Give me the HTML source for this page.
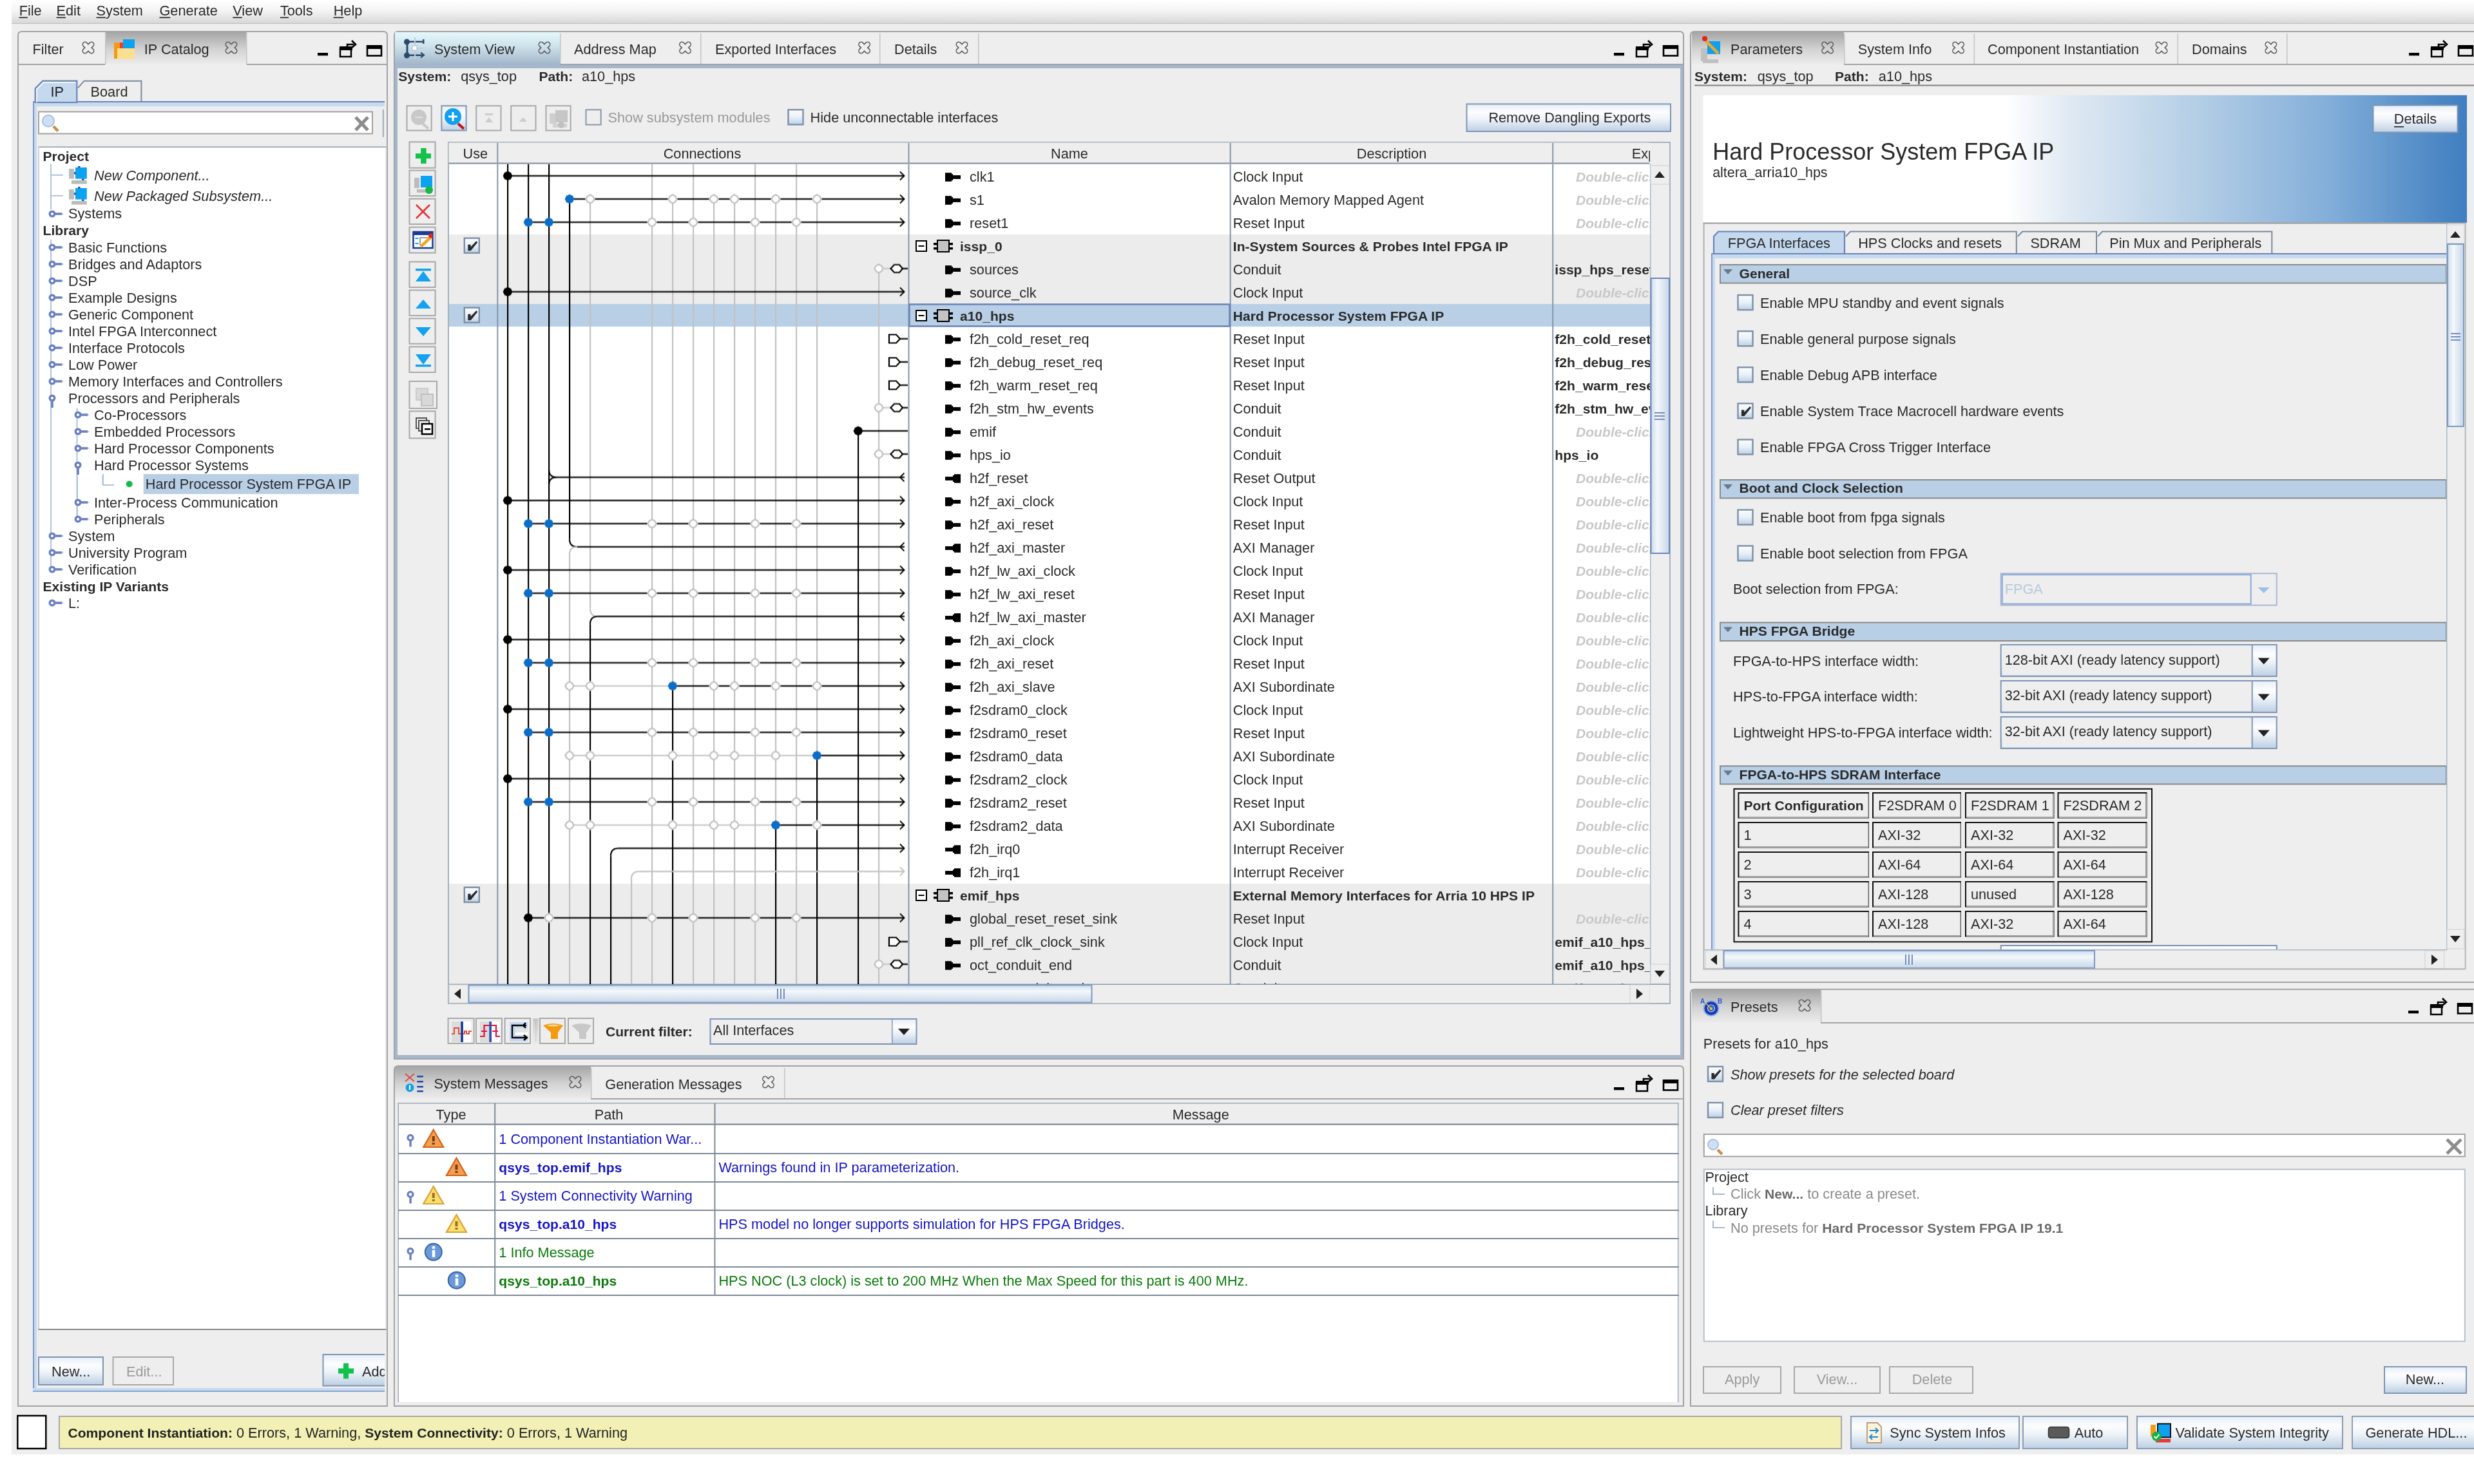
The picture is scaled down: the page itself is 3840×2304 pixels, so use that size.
<!DOCTYPE html><html><head><meta charset="utf-8"><style>html,body{margin:0;padding:0;background:#fff;overflow:hidden}svg{display:block;will-change:transform}text{font-family:"Liberation Sans",sans-serif}</style></head><body><svg width="3840" height="2304" viewBox="0 0 3840 2304"><defs><linearGradient id="cbg" x1="0" y1="0" x2="0" y2="1"><stop offset="0" stop-color="#fbfdff"/><stop offset="0.5" stop-color="#e8f0f8"/><stop offset="1" stop-color="#bcd0e8"/></linearGradient></defs>
<defs><linearGradient id="menug" x1="0" y1="0" x2="0" y2="1"><stop offset="0" stop-color="#ffffff"/><stop offset="0.5" stop-color="#f3f3f3"/><stop offset="1" stop-color="#d9d9d9"/></linearGradient></defs>
<defs><linearGradient id="tabdark" x1="0" y1="0" x2="0" y2="1"><stop offset="0" stop-color="#a6a6a6"/><stop offset="0.55" stop-color="#d4d4d4"/><stop offset="1" stop-color="#ececec"/></linearGradient></defs>
<defs><linearGradient id="tabblue" x1="0" y1="0" x2="0" y2="1"><stop offset="0" stop-color="#e4f8fc"/><stop offset="0.4" stop-color="#cfe3ec"/><stop offset="1" stop-color="#9fb3c8"/></linearGradient></defs>
<defs><linearGradient id="btng" x1="0" y1="0" x2="0" y2="1"><stop offset="0" stop-color="#e6eef7"/><stop offset="0.3" stop-color="#fcfdfe"/><stop offset="0.55" stop-color="#eef3f8"/><stop offset="1" stop-color="#bccfe4"/></linearGradient></defs>
<defs><linearGradient id="sbg" x1="0" y1="0" x2="0" y2="1"><stop offset="0" stop-color="#cbdcec"/><stop offset="0.35" stop-color="#f4f8fb"/><stop offset="1" stop-color="#c5d6e8"/></linearGradient></defs>
<defs><linearGradient id="sbv" x1="0" y1="0" x2="1" y2="0"><stop offset="0" stop-color="#cbdcec"/><stop offset="0.35" stop-color="#f4f8fb"/><stop offset="1" stop-color="#c5d6e8"/></linearGradient></defs>
<rect x="0" y="0" width="3840" height="2304" fill="#ffffff"/>
<rect x="18" y="0" width="3822" height="2258" fill="#eeeeee"/>
<rect x="18" y="0" width="3822" height="35" fill="url(#menug)"/>
<rect x="18" y="35.5" width="3822" height="1.6" fill="#c0c0c0"/>
<text x="29.7" y="24" font-size="21.7" fill="#2a2a2a">File</text>
<text x="87.6" y="24" font-size="21.7" fill="#2a2a2a">Edit</text>
<text x="149.6" y="24" font-size="21.7" fill="#2a2a2a">System</text>
<text x="247.5" y="24" font-size="21.7" fill="#2a2a2a">Generate</text>
<text x="361.3" y="24" font-size="21.7" fill="#2a2a2a">View</text>
<text x="434.9" y="24" font-size="21.7" fill="#2a2a2a">Tools</text>
<text x="517.7" y="24" font-size="21.7" fill="#2a2a2a">Help</text>
<rect x="29.7" y="26.5" width="13.140625" height="1.6" fill="#222"/>
<rect x="87.6" y="26.5" width="14.34375" height="1.6" fill="#222"/>
<rect x="149.6" y="26.5" width="14.34375" height="1.6" fill="#222"/>
<rect x="247.5" y="26.5" width="16.71875" height="1.6" fill="#222"/>
<rect x="361.3" y="26.5" width="14.34375" height="1.6" fill="#222"/>
<rect x="434.9" y="26.5" width="13.140625" height="1.6" fill="#222"/>
<rect x="517.7" y="26.5" width="15.53125" height="1.6" fill="#222"/>
<path d="M28,2183 L28,55 Q28,49 34,49 L595,49 Q601,49 601,55 L601,2183 Z" fill="#eeeeee" stroke="#a3a3a3" stroke-width="2"/>
<rect x="28" y="99" width="135" height="2" fill="#a3a3a3"/>
<rect x="383" y="99" width="218" height="2" fill="#a3a3a3"/>
<rect x="164" y="50" width="219" height="50" fill="url(#tabdark)"/>
<text x="223.8" y="84" font-size="21.7" fill="#2a2a2a">IP Catalog</text>
<defs><mask id="xm" maskUnits="userSpaceOnUse" x="-5" y="-5" width="30" height="30"><path d="M5,5 L15,15 M15,5 L5,15" stroke="#fff" stroke-width="9" stroke-linecap="round" fill="none"/><path d="M5,5 L15,15 M15,5 L5,15" stroke="#000" stroke-width="6" stroke-linecap="round" fill="none"/></mask></defs>
<g transform="translate(349,64)"><rect x="-3" y="-3" width="26" height="26" fill="#5a5a5a" mask="url(#xm)"/></g>
<rect x="163" y="50" width="1.5" height="50" fill="#c4c4c4"/>
<rect x="177" y="66" width="10" height="25" fill="#f59a12"/>
<rect x="186" y="66" width="6" height="12" fill="#e8402a"/>
<rect x="191" y="61" width="18" height="18" fill="#0aa3f2"/>
<rect x="182" y="75" width="27" height="16.5" fill="#fbdf90"/>
<rect x="382" y="50" width="1.5" height="50" fill="#c4c4c4"/>
<text x="50.5" y="84" font-size="21.7" fill="#2a2a2a">Filter</text>
<g transform="translate(127,64)"><rect x="-3" y="-3" width="26" height="26" fill="#5a5a5a" mask="url(#xm)"/></g>
<rect x="493" y="82" width="16" height="4.4" fill="#000"/>
<rect x="528" y="75" width="17" height="13" fill="#eeeeee" stroke="#000" stroke-width="2.5"/>
<rect x="527" y="72" width="20" height="6" fill="#000"/>
<path d="M539,72 L539,69 L549,69" fill="none" stroke="#000" stroke-width="2.6"/>
<path d="M546,63 L552,69 L546,74" fill="none" stroke="#000" stroke-width="2.6"/>
<rect x="570" y="71.5" width="22" height="15" fill="#eeeeee" stroke="#000" stroke-width="2.6"/>
<rect x="569" y="70" width="24" height="6" fill="#000"/>
<path d="M612,1644 L612,55 Q612,49 618,49 L2607,49 Q2613,49 2613,55 L2613,1644 Z" fill="#eeeeee" stroke="#a3a3a3" stroke-width="2"/>
<rect x="613" y="50" width="256" height="52" fill="url(#tabblue)"/>
<text x="674" y="84" font-size="21.7" fill="#2a2a2a">System View</text>
<g transform="translate(835,64)"><rect x="-3" y="-3" width="26" height="26" fill="#5a5a5a" mask="url(#xm)"/></g>
<rect x="869" y="52" width="1.5" height="48" fill="#c4c4c4"/>
<rect x="1087" y="52" width="1.5" height="48" fill="#c4c4c4"/>
<rect x="1365" y="52" width="1.5" height="48" fill="#c4c4c4"/>
<rect x="1518" y="52" width="1.5" height="48" fill="#c4c4c4"/>
<rect x="869" y="99" width="1743" height="2" fill="#a3a3a3"/>
<path d="M627,65 a4.5,4.5 0 1,0 9,0 a4.5,4.5 0 1,0 -9,0 Z" fill="#2a4a6a"/>
<path d="M627,86 a4.5,4.5 0 1,0 9,0 a4.5,4.5 0 1,0 -9,0 Z" fill="#2a4a6a"/>
<rect x="630.5" y="65" width="3" height="21" fill="#2a4a6a"/>
<rect x="635" y="63.5" width="23" height="2.5" fill="#2a4a6a"/>
<rect x="635" y="84.5" width="23" height="2.5" fill="#2a4a6a"/>
<rect x="656" y="61" width="2.5" height="7" fill="#2a4a6a"/>
<path d="M653,81.5 L658,85.5 L653,89.5" fill="none" stroke="#2a4a6a" stroke-width="2.2"/>
<rect x="643" y="58" width="2" height="34" fill="#c0ccd8"/>
<rect x="640" y="71" width="7" height="7" fill="#ffffff" stroke="#c0ccd8" stroke-width="1.5"/>
<rect x="647" y="74" width="10" height="1.5" fill="#c0ccd8"/>
<text x="891" y="84" font-size="21.7" fill="#2a2a2a">Address Map</text>
<g transform="translate(1053.5,64)"><rect x="-3" y="-3" width="26" height="26" fill="#5a5a5a" mask="url(#xm)"/></g>
<text x="1110" y="84" font-size="21.7" fill="#2a2a2a">Exported Interfaces</text>
<g transform="translate(1331.6,64)"><rect x="-3" y="-3" width="26" height="26" fill="#5a5a5a" mask="url(#xm)"/></g>
<text x="1388" y="84" font-size="21.7" fill="#2a2a2a">Details</text>
<g transform="translate(1483,64)"><rect x="-3" y="-3" width="26" height="26" fill="#5a5a5a" mask="url(#xm)"/></g>
<rect x="2505" y="82" width="16" height="4.4" fill="#000"/>
<rect x="2540" y="75" width="17" height="13" fill="#eeeeee" stroke="#000" stroke-width="2.5"/>
<rect x="2539" y="72" width="20" height="6" fill="#000"/>
<path d="M2551,72 L2551,69 L2561,69" fill="none" stroke="#000" stroke-width="2.6"/>
<path d="M2558,63 L2564,69 L2558,74" fill="none" stroke="#000" stroke-width="2.6"/>
<rect x="2582" y="71.5" width="22" height="15" fill="#eeeeee" stroke="#000" stroke-width="2.6"/>
<rect x="2581" y="70" width="24" height="6" fill="#000"/>
<rect x="613" y="101" width="1998" height="5" fill="#a4b7cc"/>
<rect x="613" y="101" width="4" height="1541" fill="#a4b7cc"/>
<rect x="2608" y="101" width="4" height="1541" fill="#a4b7cc"/>
<rect x="613" y="1638" width="1998" height="5" fill="#a4b7cc"/>
<path d="M612,2183 L612,1661 Q612,1655 618,1655 L2607,1655 Q2613,1655 2613,1661 L2613,2183 Z" fill="#eeeeee" stroke="#a3a3a3" stroke-width="2"/>
<rect x="613" y="1656" width="304" height="50" fill="url(#tabdark)"/>
<text x="673.4" y="1690" font-size="21.7" fill="#2a2a2a">System Messages</text>
<g transform="translate(883,1670)"><rect x="-3" y="-3" width="26" height="26" fill="#5a5a5a" mask="url(#xm)"/></g>
<rect x="917" y="1658" width="1.5" height="48" fill="#c4c4c4"/>
<rect x="1217" y="1658" width="1.5" height="48" fill="#c4c4c4"/>
<rect x="917" y="1705" width="1696" height="2" fill="#a3a3a3"/>
<text x="939.3" y="1690.5" font-size="21.7" fill="#2a2a2a">Generation Messages</text>
<g transform="translate(1182.5,1670)"><rect x="-3" y="-3" width="26" height="26" fill="#5a5a5a" mask="url(#xm)"/></g>
<rect x="2505" y="1688" width="16" height="4.4" fill="#000"/>
<rect x="2540" y="1681" width="17" height="13" fill="#eeeeee" stroke="#000" stroke-width="2.5"/>
<rect x="2539" y="1678" width="20" height="6" fill="#000"/>
<path d="M2551,1678 L2551,1675 L2561,1675" fill="none" stroke="#000" stroke-width="2.6"/>
<path d="M2558,1669 L2564,1675 L2558,1680" fill="none" stroke="#000" stroke-width="2.6"/>
<rect x="2582" y="1677.5" width="22" height="15" fill="#eeeeee" stroke="#000" stroke-width="2.6"/>
<rect x="2581" y="1676" width="24" height="6" fill="#000"/>
<path d="M2624,1525 L2624,55 Q2624,49 2630,49 L3854,49 Q3860,49 3860,55 L3860,1525 Z" fill="#eeeeee" stroke="#a3a3a3" stroke-width="2"/>
<rect x="2626" y="50" width="236" height="50" fill="url(#tabdark)"/>
<text x="2686" y="84" font-size="21.7" fill="#2a2a2a">Parameters</text>
<g transform="translate(2826.6,64)"><rect x="-3" y="-3" width="26" height="26" fill="#5a5a5a" mask="url(#xm)"/></g>
<rect x="2862" y="52" width="1.5" height="48" fill="#c4c4c4"/>
<rect x="3063.6" y="52" width="1.5" height="48" fill="#c4c4c4"/>
<rect x="3379.5" y="52" width="1.5" height="48" fill="#c4c4c4"/>
<rect x="3549" y="52" width="1.5" height="48" fill="#c4c4c4"/>
<rect x="2862" y="99" width="1000" height="2" fill="#a3a3a3"/>
<text x="2883.7" y="84" font-size="21.7" fill="#2a2a2a">System Info</text>
<g transform="translate(3029.6,64)"><rect x="-3" y="-3" width="26" height="26" fill="#5a5a5a" mask="url(#xm)"/></g>
<text x="3085" y="84" font-size="21.7" fill="#2a2a2a">Component Instantiation</text>
<g transform="translate(3345,64)"><rect x="-3" y="-3" width="26" height="26" fill="#5a5a5a" mask="url(#xm)"/></g>
<text x="3402" y="84" font-size="21.7" fill="#2a2a2a">Domains</text>
<g transform="translate(3514.8,64)"><rect x="-3" y="-3" width="26" height="26" fill="#5a5a5a" mask="url(#xm)"/></g>
<rect x="3739" y="82" width="16" height="4.4" fill="#000"/>
<rect x="3774" y="75" width="17" height="13" fill="#eeeeee" stroke="#000" stroke-width="2.5"/>
<rect x="3773" y="72" width="20" height="6" fill="#000"/>
<path d="M3785,72 L3785,69 L3795,69" fill="none" stroke="#000" stroke-width="2.6"/>
<path d="M3792,63 L3798,69 L3792,74" fill="none" stroke="#000" stroke-width="2.6"/>
<rect x="3816" y="71.5" width="22" height="15" fill="#eeeeee" stroke="#000" stroke-width="2.6"/>
<rect x="3815" y="70" width="24" height="6" fill="#000"/>
<path d="M2624,2183 L2624,1542 Q2624,1536 2630,1536 L3854,1536 Q3860,1536 3860,1542 L3860,2183 Z" fill="#eeeeee" stroke="#a3a3a3" stroke-width="2"/>
<rect x="2626" y="1537" width="200" height="51" fill="url(#tabdark)"/>
<text x="2686" y="1571" font-size="21.7" fill="#2a2a2a">Presets</text>
<g transform="translate(2791,1551)"><rect x="-3" y="-3" width="26" height="26" fill="#5a5a5a" mask="url(#xm)"/></g>
<rect x="2826" y="1538" width="1.5" height="50" fill="#c4c4c4"/>
<rect x="2826" y="1587" width="1040" height="2" fill="#a3a3a3"/>
<rect x="3738" y="1569" width="16" height="4.4" fill="#000"/>
<rect x="3773" y="1562" width="17" height="13" fill="#eeeeee" stroke="#000" stroke-width="2.5"/>
<rect x="3772" y="1559" width="20" height="6" fill="#000"/>
<path d="M3784,1559 L3784,1556 L3794,1556" fill="none" stroke="#000" stroke-width="2.6"/>
<path d="M3791,1550 L3797,1556 L3791,1561" fill="none" stroke="#000" stroke-width="2.6"/>
<rect x="3815" y="1558.5" width="22" height="15" fill="#eeeeee" stroke="#000" stroke-width="2.6"/>
<rect x="3814" y="1557" width="24" height="6" fill="#000"/>
<rect x="51" y="157" width="546" height="2.2" fill="#6a84b8"/>
<rect x="53" y="159.2" width="544" height="6" fill="#c6daf0"/>
<rect x="51" y="157" width="2" height="2004" fill="#7e98c8"/>
<rect x="53" y="159" width="4" height="2000" fill="#c6daf0"/>
<rect x="51" y="2155" width="546" height="4" fill="#c6daf0"/>
<rect x="51" y="2159" width="546" height="2" fill="#8aa4d0"/>
<path d="M54.7,159 L54.7,137.3 L66.3,125.7 L119.3,125.7 L119.3,159 Z" fill="#c4d8ee" stroke="#6a84b8" stroke-width="2.2"/>
<path d="M57,159 L57,138.5 L67.5,128 L117,128" fill="none" stroke="#ffffff" stroke-width="1.5"/>
<path d="M121,136.3 L130.5,125.7 L219.4,125.7 L219.4,157" fill="#eeeeee" stroke="#7a8a9c" stroke-width="2"/>
<text x="78.4" y="150" font-size="21.7" fill="#1e1e1e">IP</text>
<text x="140.6" y="150" font-size="21.7" fill="#2a2a2a">Board</text>
<rect x="60" y="173.5" width="518" height="34" fill="#ffffff" stroke="#a2a2a2" stroke-width="2"/>
<path d="M66,187.8 a9,9 0 1,0 18,0 a9,9 0 1,0 -18,0 Z" fill="#cfe0f4" stroke="#a9c0de" stroke-width="2"/>
<line x1="83" y1="196" x2="90" y2="203.5" stroke="#c8904c" stroke-width="4.5"/>
<line x1="552" y1="182" x2="571" y2="202" stroke="#8c8c8c" stroke-width="5"/>
<line x1="571" y1="182" x2="552" y2="202" stroke="#8c8c8c" stroke-width="5"/>
<rect x="594" y="170" width="1.5" height="43" fill="#8898a8"/>
<rect x="59.5" y="228.5" width="538" height="1836" fill="#ffffff"/>
<rect x="59.5" y="227.5" width="540" height="1.5" fill="#8a9aaa"/>
<rect x="59.5" y="227.5" width="1.5" height="1837" fill="#c0cad4"/>
<rect x="59.5" y="2063" width="540" height="2" fill="#8a8a8a"/>
<text x="66.5" y="249.5" font-size="21.1" fill="#2a2a2a" font-weight="bold">Project</text>
<rect x="78" y="255" width="2" height="70" fill="#afc3dd"/>
<rect x="80" y="270.8" width="18" height="2" fill="#afc3dd"/>
<rect x="80" y="302.8" width="18" height="2" fill="#afc3dd"/>
<rect x="107" y="262" width="8" height="15.6" fill="#bcbcbc"/>
<rect x="117" y="260" width="17.8" height="17.6" fill="#0aa3f2"/>
<rect x="111" y="280" width="23.8" height="5.6" fill="#bcbcbc"/>
<rect x="121" y="258" width="3.5" height="2.5" fill="#1a56a8"/>
<rect x="115" y="267" width="2.5" height="3.5" fill="#1a56a8"/>
<rect x="127" y="277.5" width="3.5" height="2.5" fill="#1a56a8"/>
<rect x="107" y="294" width="8" height="15.6" fill="#bcbcbc"/>
<rect x="117" y="292" width="17.8" height="17.6" fill="#0aa3f2"/>
<rect x="111" y="312" width="23.8" height="5.6" fill="#bcbcbc"/>
<rect x="121" y="290" width="3.5" height="2.5" fill="#1a56a8"/>
<rect x="115" y="299" width="2.5" height="3.5" fill="#1a56a8"/>
<rect x="127" y="309.5" width="3.5" height="2.5" fill="#1a56a8"/>
<text x="146" y="280" font-size="21.7" fill="#2a2a2a" font-style="italic">New Component...</text>
<text x="146" y="311.8" font-size="21.7" fill="#2a2a2a" font-style="italic">New Packaged Subsystem...</text>
<path d="M77.2,332 a3.8,3.8 0 1,0 7.6,0 a3.8,3.8 0 1,0 -7.6,0 Z" fill="#ffffff" stroke="#6a80c0" stroke-width="3.4"/>
<rect x="86" y="330.2" width="10.5" height="3.6" fill="#6a80c0"/>
<rect x="96.5" y="331" width="2" height="2" fill="#c8d4ec"/>
<text x="106" y="339.3" font-size="21.7" fill="#2a2a2a">Systems</text>
<text x="66.5" y="365.3" font-size="21.1" fill="#2a2a2a" font-weight="bold">Library</text>
<rect x="78" y="372" width="2" height="512" fill="#afc3dd"/>
<path d="M77.2,384 a3.8,3.8 0 1,0 7.6,0 a3.8,3.8 0 1,0 -7.6,0 Z" fill="#ffffff" stroke="#6a80c0" stroke-width="3.4"/>
<rect x="86" y="382.2" width="10.5" height="3.6" fill="#6a80c0"/>
<rect x="96.5" y="383" width="2" height="2" fill="#c8d4ec"/>
<text x="106" y="392" font-size="21.7" fill="#2a2a2a">Basic Functions</text>
<path d="M77.2,410 a3.8,3.8 0 1,0 7.6,0 a3.8,3.8 0 1,0 -7.6,0 Z" fill="#ffffff" stroke="#6a80c0" stroke-width="3.4"/>
<rect x="86" y="408.2" width="10.5" height="3.6" fill="#6a80c0"/>
<rect x="96.5" y="409" width="2" height="2" fill="#c8d4ec"/>
<text x="106" y="418" font-size="21.7" fill="#2a2a2a">Bridges and Adaptors</text>
<path d="M77.2,436 a3.8,3.8 0 1,0 7.6,0 a3.8,3.8 0 1,0 -7.6,0 Z" fill="#ffffff" stroke="#6a80c0" stroke-width="3.4"/>
<rect x="86" y="434.2" width="10.5" height="3.6" fill="#6a80c0"/>
<rect x="96.5" y="435" width="2" height="2" fill="#c8d4ec"/>
<text x="106" y="444" font-size="21.7" fill="#2a2a2a">DSP</text>
<path d="M77.2,462 a3.8,3.8 0 1,0 7.6,0 a3.8,3.8 0 1,0 -7.6,0 Z" fill="#ffffff" stroke="#6a80c0" stroke-width="3.4"/>
<rect x="86" y="460.2" width="10.5" height="3.6" fill="#6a80c0"/>
<rect x="96.5" y="461" width="2" height="2" fill="#c8d4ec"/>
<text x="106" y="470" font-size="21.7" fill="#2a2a2a">Example Designs</text>
<path d="M77.2,488 a3.8,3.8 0 1,0 7.6,0 a3.8,3.8 0 1,0 -7.6,0 Z" fill="#ffffff" stroke="#6a80c0" stroke-width="3.4"/>
<rect x="86" y="486.2" width="10.5" height="3.6" fill="#6a80c0"/>
<rect x="96.5" y="487" width="2" height="2" fill="#c8d4ec"/>
<text x="106" y="496" font-size="21.7" fill="#2a2a2a">Generic Component</text>
<path d="M77.2,514 a3.8,3.8 0 1,0 7.6,0 a3.8,3.8 0 1,0 -7.6,0 Z" fill="#ffffff" stroke="#6a80c0" stroke-width="3.4"/>
<rect x="86" y="512.2" width="10.5" height="3.6" fill="#6a80c0"/>
<rect x="96.5" y="513" width="2" height="2" fill="#c8d4ec"/>
<text x="106" y="522" font-size="21.7" fill="#2a2a2a">Intel FPGA Interconnect</text>
<path d="M77.2,540 a3.8,3.8 0 1,0 7.6,0 a3.8,3.8 0 1,0 -7.6,0 Z" fill="#ffffff" stroke="#6a80c0" stroke-width="3.4"/>
<rect x="86" y="538.2" width="10.5" height="3.6" fill="#6a80c0"/>
<rect x="96.5" y="539" width="2" height="2" fill="#c8d4ec"/>
<text x="106" y="548" font-size="21.7" fill="#2a2a2a">Interface Protocols</text>
<path d="M77.2,566 a3.8,3.8 0 1,0 7.6,0 a3.8,3.8 0 1,0 -7.6,0 Z" fill="#ffffff" stroke="#6a80c0" stroke-width="3.4"/>
<rect x="86" y="564.2" width="10.5" height="3.6" fill="#6a80c0"/>
<rect x="96.5" y="565" width="2" height="2" fill="#c8d4ec"/>
<text x="106" y="574" font-size="21.7" fill="#2a2a2a">Low Power</text>
<path d="M77.2,592 a3.8,3.8 0 1,0 7.6,0 a3.8,3.8 0 1,0 -7.6,0 Z" fill="#ffffff" stroke="#6a80c0" stroke-width="3.4"/>
<rect x="86" y="590.2" width="10.5" height="3.6" fill="#6a80c0"/>
<rect x="96.5" y="591" width="2" height="2" fill="#c8d4ec"/>
<text x="106" y="600" font-size="21.7" fill="#2a2a2a">Memory Interfaces and Controllers</text>
<path d="M77.2,618 a3.8,3.8 0 1,0 7.6,0 a3.8,3.8 0 1,0 -7.6,0 Z" fill="#ffffff" stroke="#6a80c0" stroke-width="3.4"/>
<rect x="79.2" y="623" width="3.6" height="10" fill="#6a80c0"/>
<text x="106" y="626" font-size="21.7" fill="#2a2a2a">Processors and Peripherals</text>
<rect x="119" y="739" width="2" height="70" fill="#afc3dd"/>
<rect x="119" y="634" width="2" height="2" fill="#afc3dd"/>
<rect x="118.5" y="634" width="2" height="172" fill="#afc3dd"/>
<path d="M117.2,644 a3.8,3.8 0 1,0 7.6,0 a3.8,3.8 0 1,0 -7.6,0 Z" fill="#ffffff" stroke="#6a80c0" stroke-width="3.4"/>
<rect x="126" y="642.2" width="10.5" height="3.6" fill="#6a80c0"/>
<rect x="136.5" y="643" width="2" height="2" fill="#c8d4ec"/>
<text x="146" y="652" font-size="21.7" fill="#2a2a2a">Co-Processors</text>
<path d="M117.2,670 a3.8,3.8 0 1,0 7.6,0 a3.8,3.8 0 1,0 -7.6,0 Z" fill="#ffffff" stroke="#6a80c0" stroke-width="3.4"/>
<rect x="126" y="668.2" width="10.5" height="3.6" fill="#6a80c0"/>
<rect x="136.5" y="669" width="2" height="2" fill="#c8d4ec"/>
<text x="146" y="678" font-size="21.7" fill="#2a2a2a">Embedded Processors</text>
<path d="M117.2,696 a3.8,3.8 0 1,0 7.6,0 a3.8,3.8 0 1,0 -7.6,0 Z" fill="#ffffff" stroke="#6a80c0" stroke-width="3.4"/>
<rect x="126" y="694.2" width="10.5" height="3.6" fill="#6a80c0"/>
<rect x="136.5" y="695" width="2" height="2" fill="#c8d4ec"/>
<text x="146" y="704" font-size="21.7" fill="#2a2a2a">Hard Processor Components</text>
<path d="M117.2,722 a3.8,3.8 0 1,0 7.6,0 a3.8,3.8 0 1,0 -7.6,0 Z" fill="#ffffff" stroke="#6a80c0" stroke-width="3.4"/>
<rect x="119.2" y="727" width="3.6" height="10" fill="#6a80c0"/>
<text x="146" y="730" font-size="21.7" fill="#2a2a2a">Hard Processor Systems</text>
<rect x="159" y="736" width="2" height="17" fill="#afc3dd"/>
<rect x="159" y="752" width="18" height="2" fill="#afc3dd"/>
<rect x="158.5" y="738" width="2" height="15" fill="#afc3dd"/>
<rect x="222.7" y="736" width="334.3" height="31" fill="#b8cfe6"/>
<path d="M195.7,751.5 a5,5 0 1,0 10,0 a5,5 0 1,0 -10,0 Z" fill="#16b84a"/>
<text x="225.8" y="759" font-size="21.7" fill="#2a2a2a">Hard Processor System FPGA IP</text>
<path d="M117.2,780 a3.8,3.8 0 1,0 7.6,0 a3.8,3.8 0 1,0 -7.6,0 Z" fill="#ffffff" stroke="#6a80c0" stroke-width="3.4"/>
<rect x="126" y="778.2" width="10.5" height="3.6" fill="#6a80c0"/>
<rect x="136.5" y="779" width="2" height="2" fill="#c8d4ec"/>
<text x="146" y="788" font-size="21.7" fill="#2a2a2a">Inter-Process Communication</text>
<path d="M117.2,806 a3.8,3.8 0 1,0 7.6,0 a3.8,3.8 0 1,0 -7.6,0 Z" fill="#ffffff" stroke="#6a80c0" stroke-width="3.4"/>
<rect x="126" y="804.2" width="10.5" height="3.6" fill="#6a80c0"/>
<rect x="136.5" y="805" width="2" height="2" fill="#c8d4ec"/>
<text x="146" y="814" font-size="21.7" fill="#2a2a2a">Peripherals</text>
<path d="M77.2,832 a3.8,3.8 0 1,0 7.6,0 a3.8,3.8 0 1,0 -7.6,0 Z" fill="#ffffff" stroke="#6a80c0" stroke-width="3.4"/>
<rect x="86" y="830.2" width="10.5" height="3.6" fill="#6a80c0"/>
<rect x="96.5" y="831" width="2" height="2" fill="#c8d4ec"/>
<text x="106" y="840" font-size="21.7" fill="#2a2a2a">System</text>
<path d="M77.2,858 a3.8,3.8 0 1,0 7.6,0 a3.8,3.8 0 1,0 -7.6,0 Z" fill="#ffffff" stroke="#6a80c0" stroke-width="3.4"/>
<rect x="86" y="856.2" width="10.5" height="3.6" fill="#6a80c0"/>
<rect x="96.5" y="857" width="2" height="2" fill="#c8d4ec"/>
<text x="106" y="866" font-size="21.7" fill="#2a2a2a">University Program</text>
<path d="M77.2,884 a3.8,3.8 0 1,0 7.6,0 a3.8,3.8 0 1,0 -7.6,0 Z" fill="#ffffff" stroke="#6a80c0" stroke-width="3.4"/>
<rect x="86" y="882.2" width="10.5" height="3.6" fill="#6a80c0"/>
<rect x="96.5" y="883" width="2" height="2" fill="#c8d4ec"/>
<text x="106" y="892" font-size="21.7" fill="#2a2a2a">Verification</text>
<text x="66.5" y="918" font-size="21.1" fill="#2a2a2a" font-weight="bold">Existing IP Variants</text>
<path d="M77.2,936 a3.8,3.8 0 1,0 7.6,0 a3.8,3.8 0 1,0 -7.6,0 Z" fill="#ffffff" stroke="#6a80c0" stroke-width="3.4"/>
<rect x="86" y="934.2" width="10.5" height="3.6" fill="#6a80c0"/>
<rect x="96.5" y="935" width="2" height="2" fill="#c8d4ec"/>
<text x="106" y="944" font-size="21.7" fill="#2a2a2a">L:</text>
<rect x="60" y="2107" width="100" height="43" fill="url(#btng)" stroke="#7f95b3" stroke-width="2"/>
<text x="80" y="2137" font-size="21.7" fill="#2a2a2a">New...</text>
<rect x="175.5" y="2107" width="93.5" height="43" fill="#eeeeee" stroke="#a8a8a8" stroke-width="2"/>
<text x="196" y="2137" font-size="21.7" fill="#9a9a9a">Edit...</text>
<svg x="500" y="2095" width="97" height="65" overflow="hidden"><g transform="translate(-500,-2095)">
<rect x="501.5" y="2103" width="138.5" height="48.5" fill="url(#btng)" stroke="#7f95b3" stroke-width="2"/>
<text x="562" y="2137" font-size="21.7" fill="#2a2a2a">Add</text>
<rect x="525" y="2124.5" width="24" height="8" fill="#12c24a"/>
<rect x="533" y="2116.5" width="8" height="24" fill="#12c24a"/>
</g></svg>
<text x="618.2" y="126" font-size="21.1" fill="#2a2a2a" font-weight="bold">System:</text>
<text x="715.2" y="126" font-size="21.7" fill="#2a2a2a">qsys_top</text>
<text x="836.5" y="126" font-size="21.1" fill="#2a2a2a" font-weight="bold">Path:</text>
<text x="903" y="126" font-size="21.7" fill="#2a2a2a">a10_hps</text>
<rect x="631.5" y="164.3" width="38.200000000000045" height="38.29999999999998" fill="#eeeeee" stroke="#a8a8a8" stroke-width="2"/>
<rect x="739.3" y="164.3" width="38.200000000000045" height="38.29999999999998" fill="#eeeeee" stroke="#a8a8a8" stroke-width="2"/>
<rect x="793.2" y="164.3" width="38.299999999999955" height="38.29999999999998" fill="#eeeeee" stroke="#a8a8a8" stroke-width="2"/>
<rect x="847.5" y="164.3" width="38.200000000000045" height="38.29999999999998" fill="#eeeeee" stroke="#a8a8a8" stroke-width="2"/>
<rect x="685.4" y="164.3" width="38.200000000000045" height="38.29999999999998" fill="url(#btng)" stroke="#7f95b3" stroke-width="2"/>
<path d="M638,182 a12,12 0 1,0 24,0 a12,12 0 1,0 -24,0 Z" fill="#c8c8c8"/>
<line x1="656" y1="192" x2="665" y2="200" stroke="#c8c8c8" stroke-width="4"/>
<rect x="644" y="181" width="12" height="2.5" fill="#dedede"/>
<path d="M690,181 a13,13 0 1,0 26,0 a13,13 0 1,0 -26,0 Z" fill="#10a0f0"/>
<rect x="696" y="179.5" width="14" height="3" fill="#fff"/>
<rect x="701.5" y="174" width="3" height="14" fill="#fff"/>
<line x1="711" y1="192" x2="720" y2="200" stroke="#c0141e" stroke-width="4"/>
<rect x="753" y="176" width="12" height="3" fill="#cccccc"/>
<path d="M753,190 L765,190 L759,182 Z" fill="#cccccc"/>
<path d="M806,189 L818,189 L812,182 Z" fill="#cccccc"/>
<rect x="853" y="176" width="10" height="16" fill="#cfcfcf"/>
<rect x="862" y="171" width="19" height="19" fill="#c6c6c6"/>
<rect x="858" y="192" width="22" height="6" fill="#d2d2d2"/>
<path d="M866,194 a5,5 0 1,0 10,0 a5,5 0 1,0 -10,0 Z" fill="#c0c0c0"/>
<rect x="909.5" y="170.4" width="23.2" height="23.2" fill="none" stroke="#8898aa" stroke-width="2"/>
<text x="943.6" y="190.4" font-size="21.7" fill="#9a9a9a">Show subsystem modules</text>
<rect x="1223.5" y="170.4" width="23" height="23" fill="url(#cbg)" stroke="#7d90a6" stroke-width="2.4"/>
<text x="1257.6" y="190.4" font-size="21.7" fill="#2a2a2a">Hide unconnectable interfaces</text>
<rect x="2276.5" y="161.5" width="316.5" height="42.5" fill="url(#btng)" stroke="#7f95b3" stroke-width="2"/>
<text x="2310.4" y="190.2" font-size="21.7" fill="#2a2a2a">Remove Dangling Exports</text>
<rect x="635.5" y="220.4" width="40.10000000000002" height="40.29999999999998" fill="#eeeeee" stroke="#a8a8a8" stroke-width="2"/>
<rect x="635.5" y="264.6" width="40.10000000000002" height="39.599999999999966" fill="#eeeeee" stroke="#a8a8a8" stroke-width="2"/>
<rect x="635.5" y="308.7" width="40.10000000000002" height="39.30000000000001" fill="#eeeeee" stroke="#a8a8a8" stroke-width="2"/>
<rect x="635.5" y="352.7" width="40.10000000000002" height="39.900000000000034" fill="#eeeeee" stroke="#a8a8a8" stroke-width="2"/>
<rect x="635.5" y="406.5" width="40.10000000000002" height="39.5" fill="#eeeeee" stroke="#a8a8a8" stroke-width="2"/>
<rect x="635.5" y="450.5" width="40.10000000000002" height="39.5" fill="#eeeeee" stroke="#a8a8a8" stroke-width="2"/>
<rect x="635.5" y="494.5" width="40.10000000000002" height="39.200000000000045" fill="#eeeeee" stroke="#a8a8a8" stroke-width="2"/>
<rect x="635.5" y="538.4" width="40.10000000000002" height="39.60000000000002" fill="#eeeeee" stroke="#a8a8a8" stroke-width="2"/>
<rect x="635.5" y="638.4" width="40.10000000000002" height="42.0" fill="#eeeeee" stroke="#a8a8a8" stroke-width="2"/>
<rect x="635.5" y="592" width="42.5" height="42" fill="#eeeeee" stroke="#a8a8a8" stroke-width="2"/>
<rect x="645" y="238.3" width="24" height="7.8" fill="#12c24a"/>
<rect x="653.2" y="230" width="8.5" height="24" fill="#12c24a"/>
<rect x="643" y="276" width="8" height="16" fill="#bcbcbc"/>
<rect x="653" y="273" width="18" height="18" fill="#0aa3f2"/>
<rect x="647" y="294" width="22" height="5" fill="#bcbcbc"/>
<path d="M660,295 a6,6 0 1,0 12,0 a6,6 0 1,0 -12,0 Z" fill="#18b848"/>
<line x1="646" y1="318" x2="667" y2="339" stroke="#e83232" stroke-width="2.5"/>
<line x1="667" y1="318" x2="646" y2="339" stroke="#e83232" stroke-width="2.5"/>
<rect x="641.5" y="360" width="30" height="25" fill="#fff" stroke="#1a3c96" stroke-width="2.5"/>
<rect x="641.5" y="360" width="30" height="5" fill="#1a3c96"/>
<rect x="644.5" y="369" width="5" height="2" fill="#10a0f0"/>
<rect x="644.5" y="377" width="5" height="2" fill="#10a0f0"/>
<path d="M652,381 L652,369 L664,369" fill="none" stroke="#a0a0a0" stroke-width="2"/>
<line x1="653" y1="383" x2="669" y2="368" stroke="#f0a820" stroke-width="4.5"/>
<path d="M665,366 a3.5,3.5 0 1,0 7,0 a3.5,3.5 0 1,0 -7,0 Z" fill="#e82020"/>
<rect x="645" y="417" width="24" height="3.5" fill="#12a2f0"/>
<path d="M645,437 L669,437 L657,421 Z" fill="#12a2f0"/>
<path d="M645,479 L669,479 L657,465 Z" fill="#12a2f0"/>
<path d="M645,508 L669,508 L657,522 Z" fill="#12a2f0"/>
<path d="M645,550 L669,550 L657,566 Z" fill="#12a2f0"/>
<rect x="645" y="566" width="24" height="3.5" fill="#12a2f0"/>
<rect x="646" y="603" width="18" height="18" fill="#d8d8d8" stroke="#cccccc" stroke-width="2"/>
<rect x="654" y="612" width="18" height="18" fill="#d8d8d8" stroke="#c0c0c0" stroke-width="2"/>
<rect x="646" y="649" width="16" height="16" fill="#eee" stroke="#555" stroke-width="2"/>
<rect x="650" y="653" width="16" height="16" fill="#eee" stroke="#555" stroke-width="2"/>
<rect x="655" y="658" width="16" height="16" fill="#fff" stroke="#000" stroke-width="2.5"/>
<rect x="659" y="665" width="9" height="2.5" fill="#000"/>
<rect x="696" y="221" width="1896" height="1337" fill="#ffffff" stroke="#8a9aaa" stroke-width="1.5"/>
<rect x="696.5" y="221.5" width="1864" height="32" fill="#eeeeee"/>
<rect x="696.5" y="252.5" width="1864" height="2.2" fill="#8596a8"/>
<rect x="771.3" y="222" width="2" height="31" fill="#8596a8"/>
<rect x="1409.5" y="222" width="2" height="31" fill="#8596a8"/>
<rect x="1908.7" y="222" width="2" height="31" fill="#8596a8"/>
<rect x="2409.2" y="222" width="2" height="31" fill="#8596a8"/>
<text x="718.6" y="245.5" font-size="21.7" fill="#2a2a2a">Use</text>
<text x="1090" y="245.5" font-size="21.7" fill="#2a2a2a" text-anchor="middle">Connections</text>
<text x="1660" y="245.5" font-size="21.7" fill="#2a2a2a" text-anchor="middle">Name</text>
<text x="2160" y="245.5" font-size="21.7" fill="#2a2a2a" text-anchor="middle">Description</text>
<svg x="2410" y="222" width="151" height="32" overflow="hidden"><g transform="translate(-2410,-222)">
<text x="2532.8" y="246" font-size="21.7" fill="#2a2a2a">Exp</text>
</g></svg>
<svg x="697" y="254.5" width="1864" height="1273.5" overflow="hidden"><g transform="translate(-697,-254.5)">
<rect x="697" y="364" width="1864" height="36" fill="#ececec"/>
<rect x="697" y="400" width="1864" height="36" fill="#ececec"/>
<rect x="697" y="436" width="1864" height="36" fill="#ececec"/>
<rect x="697" y="472" width="1864" height="35" fill="#b8cfe6"/>
<rect x="697" y="1372" width="1864" height="36" fill="#ececec"/>
<rect x="697" y="1408" width="1864" height="36" fill="#ececec"/>
<rect x="697" y="1444" width="1864" height="36" fill="#ececec"/>
<rect x="697" y="1480" width="1864" height="36" fill="#ececec"/>
<rect x="697" y="1516" width="1864" height="36" fill="#ececec"/>
<rect x="771.3" y="254" width="2" height="1274" fill="#8596a8"/>
<rect x="1409.5" y="254" width="2" height="1274" fill="#8596a8"/>
<rect x="1908.7" y="254" width="2" height="1274" fill="#8596a8"/>
<rect x="2409.2" y="254" width="2" height="1274" fill="#8596a8"/>
<rect x="1467" y="268.2" width="10" height="13.6" fill="#000"/>
<rect x="1477" y="270" width="2" height="10" fill="#000"/>
<rect x="1479" y="272.1" width="12" height="5.8" fill="#000"/>
<text x="1505" y="282" font-size="21.7" fill="#2a2a2a">clk1</text>
<text x="1913.8" y="282" font-size="21.7" fill="#2a2a2a">Clock Input</text>
<rect x="1467" y="304.2" width="10" height="13.6" fill="#000"/>
<rect x="1477" y="306" width="2" height="10" fill="#000"/>
<rect x="1479" y="308.1" width="12" height="5.8" fill="#000"/>
<text x="1505" y="318" font-size="21.7" fill="#2a2a2a">s1</text>
<text x="1913.8" y="318" font-size="21.7" fill="#2a2a2a">Avalon Memory Mapped Agent</text>
<rect x="1467" y="340.2" width="10" height="13.6" fill="#000"/>
<rect x="1477" y="342" width="2" height="10" fill="#000"/>
<rect x="1479" y="344.1" width="12" height="5.8" fill="#000"/>
<text x="1505" y="354" font-size="21.7" fill="#2a2a2a">reset1</text>
<text x="1913.8" y="354" font-size="21.7" fill="#2a2a2a">Reset Input</text>
<rect x="1422" y="374" width="16" height="16" fill="#ffffff" stroke="#000" stroke-width="2"/>
<rect x="1425.5" y="381" width="9" height="2" fill="#000"/>
<rect x="1449" y="377" width="30" height="3.5" fill="#000"/>
<rect x="1449" y="384" width="30" height="3.5" fill="#000"/>
<rect x="1455" y="373" width="18" height="18" fill="#c4c4c4" stroke="#000" stroke-width="2"/>
<text x="1490" y="390" font-size="21.1" fill="#2a2a2a" font-weight="bold">issp_0</text>
<text x="1913.8" y="390" font-size="21.1" fill="#2a2a2a" font-weight="bold">In-System Sources &amp; Probes Intel FPGA IP</text>
<rect x="720.8" y="369.7" width="23" height="23" fill="url(#cbg)" stroke="#7d90a6" stroke-width="2.4"/>
<path d="M726.3,379.7 L730.5999999999999,379.7 L730.5999999999999,383.2 L739.3,374.2 L741.3,376.2 L730.8,389.2 L726.3,389.2 Z" fill="#2a2a2a"/>
<rect x="1467" y="412.2" width="10" height="13.6" fill="#000"/>
<rect x="1477" y="414" width="2" height="10" fill="#000"/>
<rect x="1479" y="416.1" width="12" height="5.8" fill="#000"/>
<text x="1505" y="426" font-size="21.7" fill="#2a2a2a">sources</text>
<text x="1913.8" y="426" font-size="21.7" fill="#2a2a2a">Conduit</text>
<rect x="1467" y="448.2" width="10" height="13.6" fill="#000"/>
<rect x="1477" y="450" width="2" height="10" fill="#000"/>
<rect x="1479" y="452.1" width="12" height="5.8" fill="#000"/>
<text x="1505" y="462" font-size="21.7" fill="#2a2a2a">source_clk</text>
<text x="1913.8" y="462" font-size="21.7" fill="#2a2a2a">Clock Input</text>
<rect x="1422" y="482" width="16" height="16" fill="#ffffff" stroke="#000" stroke-width="2"/>
<rect x="1425.5" y="489" width="9" height="2" fill="#000"/>
<rect x="1449" y="485" width="30" height="3.5" fill="#000"/>
<rect x="1449" y="492" width="30" height="3.5" fill="#000"/>
<rect x="1455" y="481" width="18" height="18" fill="#c4c4c4" stroke="#000" stroke-width="2"/>
<text x="1490" y="498" font-size="21.1" fill="#2a2a2a" font-weight="bold">a10_hps</text>
<text x="1913.8" y="498" font-size="21.1" fill="#2a2a2a" font-weight="bold">Hard Processor System FPGA IP</text>
<rect x="720.8" y="477.7" width="23" height="23" fill="url(#cbg)" stroke="#7d90a6" stroke-width="2.4"/>
<path d="M726.3,487.7 L730.5999999999999,487.7 L730.5999999999999,491.2 L739.3,482.2 L741.3,484.2 L730.8,497.2 L726.3,497.2 Z" fill="#2a2a2a"/>
<rect x="1467" y="520.2" width="10" height="13.6" fill="#000"/>
<rect x="1477" y="522" width="2" height="10" fill="#000"/>
<rect x="1479" y="524.1" width="12" height="5.8" fill="#000"/>
<text x="1505" y="534" font-size="21.7" fill="#2a2a2a">f2h_cold_reset_req</text>
<text x="1913.8" y="534" font-size="21.7" fill="#2a2a2a">Reset Input</text>
<rect x="1467" y="556.2" width="10" height="13.6" fill="#000"/>
<rect x="1477" y="558" width="2" height="10" fill="#000"/>
<rect x="1479" y="560.1" width="12" height="5.8" fill="#000"/>
<text x="1505" y="570" font-size="21.7" fill="#2a2a2a">f2h_debug_reset_req</text>
<text x="1913.8" y="570" font-size="21.7" fill="#2a2a2a">Reset Input</text>
<rect x="1467" y="592.2" width="10" height="13.6" fill="#000"/>
<rect x="1477" y="594" width="2" height="10" fill="#000"/>
<rect x="1479" y="596.1" width="12" height="5.8" fill="#000"/>
<text x="1505" y="606" font-size="21.7" fill="#2a2a2a">f2h_warm_reset_req</text>
<text x="1913.8" y="606" font-size="21.7" fill="#2a2a2a">Reset Input</text>
<rect x="1467" y="628.2" width="10" height="13.6" fill="#000"/>
<rect x="1477" y="630" width="2" height="10" fill="#000"/>
<rect x="1479" y="632.1" width="12" height="5.8" fill="#000"/>
<text x="1505" y="642" font-size="21.7" fill="#2a2a2a">f2h_stm_hw_events</text>
<text x="1913.8" y="642" font-size="21.7" fill="#2a2a2a">Conduit</text>
<rect x="1467" y="664.2" width="10" height="13.6" fill="#000"/>
<rect x="1477" y="666" width="2" height="10" fill="#000"/>
<rect x="1479" y="668.1" width="12" height="5.8" fill="#000"/>
<text x="1505" y="678" font-size="21.7" fill="#2a2a2a">emif</text>
<text x="1913.8" y="678" font-size="21.7" fill="#2a2a2a">Conduit</text>
<rect x="1467" y="700.2" width="10" height="13.6" fill="#000"/>
<rect x="1477" y="702" width="2" height="10" fill="#000"/>
<rect x="1479" y="704.1" width="12" height="5.8" fill="#000"/>
<text x="1505" y="714" font-size="21.7" fill="#2a2a2a">hps_io</text>
<text x="1913.8" y="714" font-size="21.7" fill="#2a2a2a">Conduit</text>
<rect x="1481" y="736.2" width="10" height="13.6" fill="#000"/>
<rect x="1479" y="738" width="2" height="10" fill="#000"/>
<rect x="1467" y="740.1" width="12" height="5.8" fill="#000"/>
<text x="1505" y="750" font-size="21.7" fill="#2a2a2a">h2f_reset</text>
<text x="1913.8" y="750" font-size="21.7" fill="#2a2a2a">Reset Output</text>
<rect x="1467" y="772.2" width="10" height="13.6" fill="#000"/>
<rect x="1477" y="774" width="2" height="10" fill="#000"/>
<rect x="1479" y="776.1" width="12" height="5.8" fill="#000"/>
<text x="1505" y="786" font-size="21.7" fill="#2a2a2a">h2f_axi_clock</text>
<text x="1913.8" y="786" font-size="21.7" fill="#2a2a2a">Clock Input</text>
<rect x="1467" y="808.2" width="10" height="13.6" fill="#000"/>
<rect x="1477" y="810" width="2" height="10" fill="#000"/>
<rect x="1479" y="812.1" width="12" height="5.8" fill="#000"/>
<text x="1505" y="822" font-size="21.7" fill="#2a2a2a">h2f_axi_reset</text>
<text x="1913.8" y="822" font-size="21.7" fill="#2a2a2a">Reset Input</text>
<rect x="1481" y="844.2" width="10" height="13.6" fill="#000"/>
<rect x="1479" y="846" width="2" height="10" fill="#000"/>
<rect x="1467" y="848.1" width="12" height="5.8" fill="#000"/>
<text x="1505" y="858" font-size="21.7" fill="#2a2a2a">h2f_axi_master</text>
<text x="1913.8" y="858" font-size="21.7" fill="#2a2a2a">AXI Manager</text>
<rect x="1467" y="880.2" width="10" height="13.6" fill="#000"/>
<rect x="1477" y="882" width="2" height="10" fill="#000"/>
<rect x="1479" y="884.1" width="12" height="5.8" fill="#000"/>
<text x="1505" y="894" font-size="21.7" fill="#2a2a2a">h2f_lw_axi_clock</text>
<text x="1913.8" y="894" font-size="21.7" fill="#2a2a2a">Clock Input</text>
<rect x="1467" y="916.2" width="10" height="13.6" fill="#000"/>
<rect x="1477" y="918" width="2" height="10" fill="#000"/>
<rect x="1479" y="920.1" width="12" height="5.8" fill="#000"/>
<text x="1505" y="930" font-size="21.7" fill="#2a2a2a">h2f_lw_axi_reset</text>
<text x="1913.8" y="930" font-size="21.7" fill="#2a2a2a">Reset Input</text>
<rect x="1481" y="952.2" width="10" height="13.6" fill="#000"/>
<rect x="1479" y="954" width="2" height="10" fill="#000"/>
<rect x="1467" y="956.1" width="12" height="5.8" fill="#000"/>
<text x="1505" y="966" font-size="21.7" fill="#2a2a2a">h2f_lw_axi_master</text>
<text x="1913.8" y="966" font-size="21.7" fill="#2a2a2a">AXI Manager</text>
<rect x="1467" y="988.2" width="10" height="13.6" fill="#000"/>
<rect x="1477" y="990" width="2" height="10" fill="#000"/>
<rect x="1479" y="992.1" width="12" height="5.8" fill="#000"/>
<text x="1505" y="1002" font-size="21.7" fill="#2a2a2a">f2h_axi_clock</text>
<text x="1913.8" y="1002" font-size="21.7" fill="#2a2a2a">Clock Input</text>
<rect x="1467" y="1024.2" width="10" height="13.6" fill="#000"/>
<rect x="1477" y="1026" width="2" height="10" fill="#000"/>
<rect x="1479" y="1028.1" width="12" height="5.8" fill="#000"/>
<text x="1505" y="1038" font-size="21.7" fill="#2a2a2a">f2h_axi_reset</text>
<text x="1913.8" y="1038" font-size="21.7" fill="#2a2a2a">Reset Input</text>
<rect x="1467" y="1060.2" width="10" height="13.6" fill="#000"/>
<rect x="1477" y="1062" width="2" height="10" fill="#000"/>
<rect x="1479" y="1064.1" width="12" height="5.8" fill="#000"/>
<text x="1505" y="1074" font-size="21.7" fill="#2a2a2a">f2h_axi_slave</text>
<text x="1913.8" y="1074" font-size="21.7" fill="#2a2a2a">AXI Subordinate</text>
<rect x="1467" y="1096.2" width="10" height="13.6" fill="#000"/>
<rect x="1477" y="1098" width="2" height="10" fill="#000"/>
<rect x="1479" y="1100.1" width="12" height="5.8" fill="#000"/>
<text x="1505" y="1110" font-size="21.7" fill="#2a2a2a">f2sdram0_clock</text>
<text x="1913.8" y="1110" font-size="21.7" fill="#2a2a2a">Clock Input</text>
<rect x="1467" y="1132.2" width="10" height="13.6" fill="#000"/>
<rect x="1477" y="1134" width="2" height="10" fill="#000"/>
<rect x="1479" y="1136.1" width="12" height="5.8" fill="#000"/>
<text x="1505" y="1146" font-size="21.7" fill="#2a2a2a">f2sdram0_reset</text>
<text x="1913.8" y="1146" font-size="21.7" fill="#2a2a2a">Reset Input</text>
<rect x="1467" y="1168.2" width="10" height="13.6" fill="#000"/>
<rect x="1477" y="1170" width="2" height="10" fill="#000"/>
<rect x="1479" y="1172.1" width="12" height="5.8" fill="#000"/>
<text x="1505" y="1182" font-size="21.7" fill="#2a2a2a">f2sdram0_data</text>
<text x="1913.8" y="1182" font-size="21.7" fill="#2a2a2a">AXI Subordinate</text>
<rect x="1467" y="1204.2" width="10" height="13.6" fill="#000"/>
<rect x="1477" y="1206" width="2" height="10" fill="#000"/>
<rect x="1479" y="1208.1" width="12" height="5.8" fill="#000"/>
<text x="1505" y="1218" font-size="21.7" fill="#2a2a2a">f2sdram2_clock</text>
<text x="1913.8" y="1218" font-size="21.7" fill="#2a2a2a">Clock Input</text>
<rect x="1467" y="1240.2" width="10" height="13.6" fill="#000"/>
<rect x="1477" y="1242" width="2" height="10" fill="#000"/>
<rect x="1479" y="1244.1" width="12" height="5.8" fill="#000"/>
<text x="1505" y="1254" font-size="21.7" fill="#2a2a2a">f2sdram2_reset</text>
<text x="1913.8" y="1254" font-size="21.7" fill="#2a2a2a">Reset Input</text>
<rect x="1467" y="1276.2" width="10" height="13.6" fill="#000"/>
<rect x="1477" y="1278" width="2" height="10" fill="#000"/>
<rect x="1479" y="1280.1" width="12" height="5.8" fill="#000"/>
<text x="1505" y="1290" font-size="21.7" fill="#2a2a2a">f2sdram2_data</text>
<text x="1913.8" y="1290" font-size="21.7" fill="#2a2a2a">AXI Subordinate</text>
<rect x="1481" y="1312.2" width="10" height="13.6" fill="#000"/>
<rect x="1479" y="1314" width="2" height="10" fill="#000"/>
<rect x="1467" y="1316.1" width="12" height="5.8" fill="#000"/>
<text x="1505" y="1326" font-size="21.7" fill="#2a2a2a">f2h_irq0</text>
<text x="1913.8" y="1326" font-size="21.7" fill="#2a2a2a">Interrupt Receiver</text>
<rect x="1481" y="1348.2" width="10" height="13.6" fill="#000"/>
<rect x="1479" y="1350" width="2" height="10" fill="#000"/>
<rect x="1467" y="1352.1" width="12" height="5.8" fill="#000"/>
<text x="1505" y="1362" font-size="21.7" fill="#2a2a2a">f2h_irq1</text>
<text x="1913.8" y="1362" font-size="21.7" fill="#2a2a2a">Interrupt Receiver</text>
<rect x="1422" y="1382" width="16" height="16" fill="#ffffff" stroke="#000" stroke-width="2"/>
<rect x="1425.5" y="1389" width="9" height="2" fill="#000"/>
<rect x="1449" y="1385" width="30" height="3.5" fill="#000"/>
<rect x="1449" y="1392" width="30" height="3.5" fill="#000"/>
<rect x="1455" y="1381" width="18" height="18" fill="#c4c4c4" stroke="#000" stroke-width="2"/>
<text x="1490" y="1398" font-size="21.1" fill="#2a2a2a" font-weight="bold">emif_hps</text>
<text x="1913.8" y="1398" font-size="21.1" fill="#2a2a2a" font-weight="bold">External Memory Interfaces for Arria 10 HPS IP</text>
<rect x="720.8" y="1377.7" width="23" height="23" fill="url(#cbg)" stroke="#7d90a6" stroke-width="2.4"/>
<path d="M726.3,1387.7 L730.5999999999999,1387.7 L730.5999999999999,1391.2 L739.3,1382.2 L741.3,1384.2 L730.8,1397.2 L726.3,1397.2 Z" fill="#2a2a2a"/>
<rect x="1467" y="1420.2" width="10" height="13.6" fill="#000"/>
<rect x="1477" y="1422" width="2" height="10" fill="#000"/>
<rect x="1479" y="1424.1" width="12" height="5.8" fill="#000"/>
<text x="1505" y="1434" font-size="21.7" fill="#2a2a2a">global_reset_reset_sink</text>
<text x="1913.8" y="1434" font-size="21.7" fill="#2a2a2a">Reset Input</text>
<rect x="1467" y="1456.2" width="10" height="13.6" fill="#000"/>
<rect x="1477" y="1458" width="2" height="10" fill="#000"/>
<rect x="1479" y="1460.1" width="12" height="5.8" fill="#000"/>
<text x="1505" y="1470" font-size="21.7" fill="#2a2a2a">pll_ref_clk_clock_sink</text>
<text x="1913.8" y="1470" font-size="21.7" fill="#2a2a2a">Clock Input</text>
<rect x="1467" y="1492.2" width="10" height="13.6" fill="#000"/>
<rect x="1477" y="1494" width="2" height="10" fill="#000"/>
<rect x="1479" y="1496.1" width="12" height="5.8" fill="#000"/>
<text x="1505" y="1506" font-size="21.7" fill="#2a2a2a">oct_conduit_end</text>
<text x="1913.8" y="1506" font-size="21.7" fill="#2a2a2a">Conduit</text>
<rect x="1467" y="1528.2" width="10" height="13.6" fill="#000"/>
<rect x="1477" y="1530" width="2" height="10" fill="#000"/>
<rect x="1479" y="1532.1" width="12" height="5.8" fill="#000"/>
<text x="1505" y="1542" font-size="21.7" fill="#2a2a2a">mem_conduit_end</text>
<text x="1913.8" y="1542" font-size="21.7" fill="#2a2a2a">Conduit</text>
</g></svg>
<rect x="1411.5" y="472.5" width="497" height="34" fill="none" stroke="#6a84b8" stroke-width="2.5"/>
<svg x="2411" y="254.5" width="150" height="1273.5" overflow="hidden"><g transform="translate(-2411,-254.5)">
<text x="2446" y="282" font-size="21.1" fill="#c8c8c8" font-weight="bold" font-style="italic">Double-click to export</text>
<text x="2446" y="318" font-size="21.1" fill="#c8c8c8" font-weight="bold" font-style="italic">Double-click to export</text>
<text x="2446" y="354" font-size="21.1" fill="#c8c8c8" font-weight="bold" font-style="italic">Double-click to export</text>
<text x="2413.3" y="426" font-size="21.1" fill="#2a2a2a" font-weight="bold">issp_hps_reset</text>
<text x="2446" y="462" font-size="21.1" fill="#c8c8c8" font-weight="bold" font-style="italic">Double-click to export</text>
<text x="2413.3" y="534" font-size="21.1" fill="#2a2a2a" font-weight="bold">f2h_cold_reset_req</text>
<text x="2413.3" y="570" font-size="21.1" fill="#2a2a2a" font-weight="bold">f2h_debug_reset_req</text>
<text x="2413.3" y="606" font-size="21.1" fill="#2a2a2a" font-weight="bold">f2h_warm_reset_req</text>
<text x="2413.3" y="642" font-size="21.1" fill="#2a2a2a" font-weight="bold">f2h_stm_hw_events</text>
<text x="2446" y="678" font-size="21.1" fill="#c8c8c8" font-weight="bold" font-style="italic">Double-click to export</text>
<text x="2413.3" y="714" font-size="21.1" fill="#2a2a2a" font-weight="bold">hps_io</text>
<text x="2446" y="750" font-size="21.1" fill="#c8c8c8" font-weight="bold" font-style="italic">Double-click to export</text>
<text x="2446" y="786" font-size="21.1" fill="#c8c8c8" font-weight="bold" font-style="italic">Double-click to export</text>
<text x="2446" y="822" font-size="21.1" fill="#c8c8c8" font-weight="bold" font-style="italic">Double-click to export</text>
<text x="2446" y="858" font-size="21.1" fill="#c8c8c8" font-weight="bold" font-style="italic">Double-click to export</text>
<text x="2446" y="894" font-size="21.1" fill="#c8c8c8" font-weight="bold" font-style="italic">Double-click to export</text>
<text x="2446" y="930" font-size="21.1" fill="#c8c8c8" font-weight="bold" font-style="italic">Double-click to export</text>
<text x="2446" y="966" font-size="21.1" fill="#c8c8c8" font-weight="bold" font-style="italic">Double-click to export</text>
<text x="2446" y="1002" font-size="21.1" fill="#c8c8c8" font-weight="bold" font-style="italic">Double-click to export</text>
<text x="2446" y="1038" font-size="21.1" fill="#c8c8c8" font-weight="bold" font-style="italic">Double-click to export</text>
<text x="2446" y="1074" font-size="21.1" fill="#c8c8c8" font-weight="bold" font-style="italic">Double-click to export</text>
<text x="2446" y="1110" font-size="21.1" fill="#c8c8c8" font-weight="bold" font-style="italic">Double-click to export</text>
<text x="2446" y="1146" font-size="21.1" fill="#c8c8c8" font-weight="bold" font-style="italic">Double-click to export</text>
<text x="2446" y="1182" font-size="21.1" fill="#c8c8c8" font-weight="bold" font-style="italic">Double-click to export</text>
<text x="2446" y="1218" font-size="21.1" fill="#c8c8c8" font-weight="bold" font-style="italic">Double-click to export</text>
<text x="2446" y="1254" font-size="21.1" fill="#c8c8c8" font-weight="bold" font-style="italic">Double-click to export</text>
<text x="2446" y="1290" font-size="21.1" fill="#c8c8c8" font-weight="bold" font-style="italic">Double-click to export</text>
<text x="2446" y="1326" font-size="21.1" fill="#c8c8c8" font-weight="bold" font-style="italic">Double-click to export</text>
<text x="2446" y="1362" font-size="21.1" fill="#c8c8c8" font-weight="bold" font-style="italic">Double-click to export</text>
<text x="2446" y="1434" font-size="21.1" fill="#c8c8c8" font-weight="bold" font-style="italic">Double-click to export</text>
<text x="2413.3" y="1470" font-size="21.1" fill="#2a2a2a" font-weight="bold">emif_a10_hps_pll_ref_clk</text>
<text x="2413.3" y="1506" font-size="21.1" fill="#2a2a2a" font-weight="bold">emif_a10_hps_oct</text>
<text x="2413.3" y="1542" font-size="21.1" fill="#2a2a2a" font-weight="bold">emif_a10_hps_mem</text>
</g></svg>
<rect x="2561" y="222" width="30" height="34" fill="#eeeeee"/>
<rect x="2561" y="255" width="30" height="1272" fill="#eeeeee"/>
<rect x="2561" y="255" width="1.5" height="1272" fill="#a8b8c8"/>
<rect x="2562" y="257" width="29" height="29" fill="#eeeeee" stroke="#c8d0d8" stroke-width="1"/>
<path d="M2568,276 L2584,276 L2576,266 Z" fill="#222"/>
<rect x="2562" y="1497" width="29" height="30" fill="#eeeeee" stroke="#c8d0d8" stroke-width="1"/>
<path d="M2568,1507 L2584,1507 L2576,1517 Z" fill="#222"/>
<rect x="2562.5" y="432" width="28.5" height="427" fill="url(#sbv)" stroke="#6a84b8" stroke-width="2"/>
<rect x="2568" y="640" width="16" height="1.8" fill="#6b84b8"/>
<rect x="2568" y="645" width="16" height="1.8" fill="#6b84b8"/>
<rect x="2568" y="650" width="16" height="1.8" fill="#6b84b8"/>
<rect x="697" y="1528.5" width="1864" height="29" fill="#eeeeee"/>
<rect x="697" y="1527.5" width="1894" height="1.5" fill="#8a9aaa"/>
<rect x="697" y="1529" width="30" height="28" fill="#eeeeee" stroke="#c8d0d8" stroke-width="1"/>
<path d="M715,1535 L715,1551 L705,1543 Z" fill="#222"/>
<rect x="727.5" y="1529.5" width="967" height="27" fill="url(#sbg)" stroke="#7f98c0" stroke-width="2"/>
<rect x="1206" y="1535" width="1.8" height="16" fill="#6b84b8"/>
<rect x="1211" y="1535" width="1.8" height="16" fill="#6b84b8"/>
<rect x="1216" y="1535" width="1.8" height="16" fill="#6b84b8"/>
<rect x="2530" y="1529" width="31" height="28" fill="#eeeeee" stroke="#c8d0d8" stroke-width="1"/>
<path d="M2540,1535 L2540,1551 L2550,1543 Z" fill="#222"/>
<rect x="2561" y="1529" width="30" height="28" fill="#eeeeee"/>
<rect x="695.6" y="1581" width="40.0" height="39" fill="#eeeeee" stroke="#a8a8a8" stroke-width="2"/>
<rect x="739" y="1581" width="40" height="39" fill="#eeeeee" stroke="#a8a8a8" stroke-width="2"/>
<rect x="783.6" y="1581" width="39.39999999999998" height="39" fill="#eeeeee" stroke="#a8a8a8" stroke-width="2"/>
<rect x="838" y="1581" width="39" height="39" fill="#eeeeee" stroke="#a8a8a8" stroke-width="2"/>
<rect x="882" y="1581" width="39" height="39" fill="#eeeeee" stroke="#a8a8a8" stroke-width="2"/>
<rect x="831" y="1583" width="1.5" height="36" fill="#cccccc"/>
<rect x="701" y="1586" width="14.5" height="32" fill="#dcdcdc"/>
<rect x="719" y="1586" width="12" height="32" fill="#ffffff"/>
<path d="M701,1605 L705,1605 L705,1596 L712,1596 L712,1605 L721,1605 L721,1601 L724,1601 L724,1605 L728,1605 L728,1601 L732,1601" fill="none" stroke="#e05038" stroke-width="2"/>
<rect x="715.2" y="1586" width="3.7" height="32" fill="#1a3c96"/>
<rect x="745" y="1586" width="14" height="32" fill="#dcdcdc"/>
<rect x="763" y="1586" width="12" height="32" fill="#ffffff"/>
<path d="M745,1609 L751.5,1609 L751.5,1592 L770,1592 L770,1609 L776,1609" fill="none" stroke="#e0143c" stroke-width="2.2"/>
<path d="M747,1601 L756,1601 M764,1601 L773,1601" fill="none" stroke="#e0143c" stroke-width="2.2"/>
<rect x="759.3" y="1586" width="3.7" height="32" fill="#3050b0"/>
<rect x="791" y="1587" width="28" height="30" fill="#c6d8f4"/>
<rect x="800" y="1596" width="19" height="8" fill="#e4e4e4"/>
<rect x="800" y="1603" width="19" height="4" fill="#ffffff"/>
<path d="M817,1592 L795,1592 L795,1611 L817,1611 M813,1607 L818,1611 L813,1615 M816,1588 L812,1592 L816,1596" fill="none" stroke="#000" stroke-width="2.4"/>
<rect x="827" y="1581" width="9" height="43" fill="url(#tabdark)" opacity="0.5"/>
<path d="M843,1592 Q858.5,1586 874,1592 L866,1603 L866,1613 L855,1613 L855,1603 Z" fill="#f59a10"/>
<path d="M848,1592 Q858.5,1589 869,1592 Q858.5,1595 848,1592 Z" fill="#f8d8a0"/>
<path d="M887,1592 Q902.5,1586 918,1592 L910,1603 L910,1613 L899,1613 L899,1603 Z" fill="#c8c8c8"/>
<text x="940" y="1609" font-size="21.1" fill="#2a2a2a" font-weight="bold">Current filter:</text>
<rect x="1102.5" y="1582" width="320" height="39" fill="url(#btng)" stroke="#7f95b3" stroke-width="2"/>
<rect x="1104" y="1583.5" width="280" height="36" fill="#eeeeee"/>
<rect x="1384" y="1583" width="1.5" height="37" fill="#7f95b3"/>
<text x="1107" y="1606.7" font-size="21.7" fill="#2a2a2a">All Interfaces</text>
<path d="M1394,1597 L1412,1597 L1403,1607 Z" fill="#222"/>
<svg x="773" y="254.5" width="636" height="1273.5" overflow="hidden"><g transform="translate(-773,-254.5)">
<rect x="883" y="861" width="2.2" height="669" fill="#c2c2c2"/>
<rect x="915" y="309" width="2.2" height="636" fill="#c2c2c2"/>
<rect x="979" y="1365" width="2.2" height="165" fill="#c2c2c2"/>
<rect x="1011" y="254" width="2.2" height="1276" fill="#c2c2c2"/>
<rect x="1043" y="309" width="2.2" height="756" fill="#c2c2c2"/>
<rect x="1075" y="254" width="2.2" height="1276" fill="#c2c2c2"/>
<rect x="1107" y="309" width="2.2" height="1221" fill="#c2c2c2"/>
<rect x="1139" y="309" width="2.2" height="1221" fill="#c2c2c2"/>
<rect x="1171" y="254" width="2.2" height="1276" fill="#c2c2c2"/>
<rect x="1203" y="309" width="2.2" height="972" fill="#c2c2c2"/>
<rect x="1235" y="254" width="2.2" height="1276" fill="#c2c2c2"/>
<rect x="1267" y="309" width="2.2" height="864" fill="#c2c2c2"/>
<rect x="1363" y="417" width="2.2" height="1113" fill="#c2c2c2"/>
<rect x="787" y="254" width="2.2" height="1276" fill="#000000"/>
<rect x="819" y="254" width="2.2" height="1276" fill="#000000"/>
<rect x="851" y="254" width="2.2" height="1276" fill="#000000"/>
<rect x="883" y="309" width="2.2" height="528" fill="#000000"/>
<rect x="915" y="969" width="2.2" height="561" fill="#000000"/>
<rect x="947" y="1329" width="2.2" height="201" fill="#000000"/>
<rect x="1043" y="1065" width="2.2" height="465" fill="#000000"/>
<rect x="1203" y="1281" width="2.2" height="249" fill="#000000"/>
<rect x="1267" y="1173" width="2.2" height="357" fill="#000000"/>
<rect x="1331" y="669" width="2.2" height="861" fill="#000000"/>
<rect x="788" y="271.9" width="616" height="2.2" fill="#000000"/>
<path d="M1397,266.5 L1403.5,273 L1397,279.5" fill="none" stroke="#000000" stroke-width="1.8"/>
<rect x="788" y="451.9" width="616" height="2.2" fill="#000000"/>
<path d="M1397,446.5 L1403.5,453 L1397,459.5" fill="none" stroke="#000000" stroke-width="1.8"/>
<rect x="788" y="775.9" width="616" height="2.2" fill="#000000"/>
<path d="M1397,770.5 L1403.5,777 L1397,783.5" fill="none" stroke="#000000" stroke-width="1.8"/>
<rect x="788" y="883.9" width="616" height="2.2" fill="#000000"/>
<path d="M1397,878.5 L1403.5,885 L1397,891.5" fill="none" stroke="#000000" stroke-width="1.8"/>
<rect x="788" y="991.9" width="616" height="2.2" fill="#000000"/>
<path d="M1397,986.5 L1403.5,993 L1397,999.5" fill="none" stroke="#000000" stroke-width="1.8"/>
<rect x="788" y="1099.9" width="616" height="2.2" fill="#000000"/>
<path d="M1397,1094.5 L1403.5,1101 L1397,1107.5" fill="none" stroke="#000000" stroke-width="1.8"/>
<rect x="788" y="1207.9" width="616" height="2.2" fill="#000000"/>
<path d="M1397,1202.5 L1403.5,1209 L1397,1215.5" fill="none" stroke="#000000" stroke-width="1.8"/>
<rect x="820" y="343.9" width="584" height="2.2" fill="#000000"/>
<path d="M1397,338.5 L1403.5,345 L1397,351.5" fill="none" stroke="#000000" stroke-width="1.8"/>
<rect x="820" y="811.9" width="584" height="2.2" fill="#000000"/>
<path d="M1397,806.5 L1403.5,813 L1397,819.5" fill="none" stroke="#000000" stroke-width="1.8"/>
<rect x="820" y="919.9" width="584" height="2.2" fill="#000000"/>
<path d="M1397,914.5 L1403.5,921 L1397,927.5" fill="none" stroke="#000000" stroke-width="1.8"/>
<rect x="820" y="1027.9" width="584" height="2.2" fill="#000000"/>
<path d="M1397,1022.5 L1403.5,1029 L1397,1035.5" fill="none" stroke="#000000" stroke-width="1.8"/>
<rect x="820" y="1135.9" width="584" height="2.2" fill="#000000"/>
<path d="M1397,1130.5 L1403.5,1137 L1397,1143.5" fill="none" stroke="#000000" stroke-width="1.8"/>
<rect x="820" y="1243.9" width="584" height="2.2" fill="#000000"/>
<path d="M1397,1238.5 L1403.5,1245 L1397,1251.5" fill="none" stroke="#000000" stroke-width="1.8"/>
<rect x="884" y="307.9" width="520" height="2.2" fill="#000000"/>
<path d="M1397,302.5 L1403.5,309 L1397,315.5" fill="none" stroke="#000000" stroke-width="1.8"/>
<rect x="820" y="1423.9" width="584" height="2.2" fill="#000000"/>
<path d="M1397,1418.5 L1403.5,1425 L1397,1431.5" fill="none" stroke="#000000" stroke-width="1.8"/>
<rect x="884" y="1064" width="160" height="2" fill="#c2c2c2"/>
<rect x="1044" y="1063.9" width="360" height="2.2" fill="#000000"/>
<path d="M1397,1058.5 L1403.5,1065 L1397,1071.5" fill="none" stroke="#000000" stroke-width="1.8"/>
<rect x="884" y="1172" width="384" height="2" fill="#c2c2c2"/>
<rect x="1268" y="1171.9" width="136" height="2.2" fill="#000000"/>
<path d="M1397,1166.5 L1403.5,1173 L1397,1179.5" fill="none" stroke="#000000" stroke-width="1.8"/>
<rect x="884" y="1280" width="320" height="2" fill="#c2c2c2"/>
<rect x="1204" y="1279.9" width="200" height="2.2" fill="#000000"/>
<path d="M1397,1274.5 L1403.5,1281 L1397,1287.5" fill="none" stroke="#000000" stroke-width="1.8"/>
<path d="M852,729 Q852,741 864,741" fill="none" stroke="#000000" stroke-width="2.2"/>
<path d="M864,741 Q852,741 852,753" fill="none" stroke="#000000" stroke-width="2.2"/>
<rect x="864" y="739.9" width="540" height="2.2" fill="#000000"/>
<path d="M1403.5,734.5 L1397,741 L1403.5,747.5" fill="none" stroke="#000000" stroke-width="1.8"/>
<path d="M884,837 Q884,849 896,849" fill="none" stroke="#000000" stroke-width="2.2"/>
<path d="M896,849 Q884,849 884,861" fill="none" stroke="#c2c2c2" stroke-width="2.2"/>
<rect x="896" y="847.9" width="508" height="2.2" fill="#000000"/>
<path d="M1403.5,842.5 L1397,849 L1403.5,855.5" fill="none" stroke="#000000" stroke-width="1.8"/>
<path d="M916,945 Q916,957 928,957" fill="none" stroke="#c2c2c2" stroke-width="2.2"/>
<path d="M928,957 Q916,957 916,969" fill="none" stroke="#000000" stroke-width="2.2"/>
<rect x="928" y="955.9" width="476" height="2.2" fill="#000000"/>
<path d="M1403.5,950.5 L1397,957 L1403.5,963.5" fill="none" stroke="#000000" stroke-width="1.8"/>
<path d="M948,1329 Q948,1317 960,1317" fill="none" stroke="#000000" stroke-width="2.2"/>
<rect x="960" y="1315.9" width="444" height="2.2" fill="#000000"/>
<path d="M1397,1310.5 L1403.5,1317 L1397,1323.5" fill="none" stroke="#000000" stroke-width="1.8"/>
<path d="M980,1365 Q980,1353 992,1353" fill="none" stroke="#c2c2c2" stroke-width="2.2"/>
<rect x="992" y="1351.9" width="412" height="2.2" fill="#c2c2c2"/>
<path d="M1397,1346.5 L1403.5,1353 L1397,1359.5" fill="none" stroke="#c2c2c2" stroke-width="1.8"/>
<rect x="1332" y="667.9" width="78" height="2.2" fill="#000000"/>
<rect x="1364" y="416" width="18" height="2" fill="#c2c2c2"/>
<path d="M1382.5,417 L1388,411 L1396,411 L1401,417 L1396,423 L1388,423 Z" fill="#fff" stroke="#000000" stroke-width="2.2"/>
<rect x="1401" y="415.9" width="10" height="2.2" fill="#000000"/>
<path d="M1364,410.4 L1368.2,412.8 L1370.6,417 L1368.2,421.2 L1364,423.6 L1359.8,421.2 L1357.4,417 L1359.8,412.8 Z" fill="#ffffff" stroke="#c2c2c2" stroke-width="2.4"/>
<rect x="1364" y="632" width="18" height="2" fill="#c2c2c2"/>
<path d="M1382.5,633 L1388,627 L1396,627 L1401,633 L1396,639 L1388,639 Z" fill="#fff" stroke="#000000" stroke-width="2.2"/>
<rect x="1401" y="631.9" width="10" height="2.2" fill="#000000"/>
<path d="M1364,626.4 L1368.2,628.8 L1370.6,633 L1368.2,637.2 L1364,639.6 L1359.8,637.2 L1357.4,633 L1359.8,628.8 Z" fill="#ffffff" stroke="#c2c2c2" stroke-width="2.4"/>
<rect x="1364" y="704" width="18" height="2" fill="#c2c2c2"/>
<path d="M1382.5,705 L1388,699 L1396,699 L1401,705 L1396,711 L1388,711 Z" fill="#fff" stroke="#000000" stroke-width="2.2"/>
<rect x="1401" y="703.9" width="10" height="2.2" fill="#000000"/>
<path d="M1364,698.4 L1368.2,700.8 L1370.6,705 L1368.2,709.2 L1364,711.6 L1359.8,709.2 L1357.4,705 L1359.8,700.8 Z" fill="#ffffff" stroke="#c2c2c2" stroke-width="2.4"/>
<rect x="1364" y="1496" width="18" height="2" fill="#c2c2c2"/>
<path d="M1382.5,1497 L1388,1491 L1396,1491 L1401,1497 L1396,1503 L1388,1503 Z" fill="#fff" stroke="#000000" stroke-width="2.2"/>
<rect x="1401" y="1495.9" width="10" height="2.2" fill="#000000"/>
<path d="M1364,1490.4 L1368.2,1492.8 L1370.6,1497 L1368.2,1501.2 L1364,1503.6 L1359.8,1501.2 L1357.4,1497 L1359.8,1492.8 Z" fill="#ffffff" stroke="#c2c2c2" stroke-width="2.4"/>
<path d="M1380,519.5 L1391,519.5 L1397,526 L1391,532.5 L1380,532.5 Z" fill="#fff" stroke="#000000" stroke-width="2.2"/>
<rect x="1397" y="524.9" width="14" height="2.2" fill="#000000"/>
<path d="M1380,555.5 L1391,555.5 L1397,562 L1391,568.5 L1380,568.5 Z" fill="#fff" stroke="#000000" stroke-width="2.2"/>
<rect x="1397" y="560.9" width="14" height="2.2" fill="#000000"/>
<path d="M1380,591.5 L1391,591.5 L1397,598 L1391,604.5 L1380,604.5 Z" fill="#fff" stroke="#000000" stroke-width="2.2"/>
<rect x="1397" y="596.9" width="14" height="2.2" fill="#000000"/>
<path d="M1380,1455.5 L1391,1455.5 L1397,1462 L1391,1468.5 L1380,1468.5 Z" fill="#fff" stroke="#000000" stroke-width="2.2"/>
<rect x="1397" y="1460.9" width="14" height="2.2" fill="#000000"/>
<path d="M788,265.7 L793.0,268.0 L795.3,273 L793.0,278.0 L788,280.3 L783.0,278.0 L780.7,273 L783.0,268.0 Z" fill="#000000"/>
<path d="M788,445.7 L793.0,448.0 L795.3,453 L793.0,458.0 L788,460.3 L783.0,458.0 L780.7,453 L783.0,448.0 Z" fill="#000000"/>
<path d="M788,769.7 L793.0,772.0 L795.3,777 L793.0,782.0 L788,784.3 L783.0,782.0 L780.7,777 L783.0,772.0 Z" fill="#000000"/>
<path d="M788,877.7 L793.0,880.0 L795.3,885 L793.0,890.0 L788,892.3 L783.0,890.0 L780.7,885 L783.0,880.0 Z" fill="#000000"/>
<path d="M788,985.7 L793.0,988.0 L795.3,993 L793.0,998.0 L788,1000.3 L783.0,998.0 L780.7,993 L783.0,988.0 Z" fill="#000000"/>
<path d="M788,1093.7 L793.0,1096.0 L795.3,1101 L793.0,1106.0 L788,1108.3 L783.0,1106.0 L780.7,1101 L783.0,1096.0 Z" fill="#000000"/>
<path d="M788,1201.7 L793.0,1204.0 L795.3,1209 L793.0,1214.0 L788,1216.3 L783.0,1214.0 L780.7,1209 L783.0,1204.0 Z" fill="#000000"/>
<path d="M820,1417.7 L825.0,1420.0 L827.3,1425 L825.0,1430.0 L820,1432.3 L815.0,1430.0 L812.7,1425 L815.0,1420.0 Z" fill="#000000"/>
<path d="M1332,661.7 L1337.0,664.0 L1339.3,669 L1337.0,674.0 L1332,676.3 L1327.0,674.0 L1324.7,669 L1327.0,664.0 Z" fill="#000000"/>
<path d="M884,301.7 L889.0,304.0 L891.3,309 L889.0,314.0 L884,316.3 L879.0,314.0 L876.7,309 L879.0,304.0 Z" fill="#0a6ec8"/>
<path d="M820,337.7 L825.0,340.0 L827.3,345 L825.0,350.0 L820,352.3 L815.0,350.0 L812.7,345 L815.0,340.0 Z" fill="#0a6ec8"/>
<path d="M852,337.7 L857.0,340.0 L859.3,345 L857.0,350.0 L852,352.3 L847.0,350.0 L844.7,345 L847.0,340.0 Z" fill="#0a6ec8"/>
<path d="M1012,338.4 L1016.2,340.8 L1018.6,345 L1016.2,349.2 L1012,351.6 L1007.8,349.2 L1005.4,345 L1007.8,340.8 Z" fill="#ffffff" stroke="#c2c2c2" stroke-width="2.4"/>
<path d="M1076,338.4 L1080.2,340.8 L1082.6,345 L1080.2,349.2 L1076,351.6 L1071.8,349.2 L1069.4,345 L1071.8,340.8 Z" fill="#ffffff" stroke="#c2c2c2" stroke-width="2.4"/>
<path d="M1172,338.4 L1176.2,340.8 L1178.6,345 L1176.2,349.2 L1172,351.6 L1167.8,349.2 L1165.4,345 L1167.8,340.8 Z" fill="#ffffff" stroke="#c2c2c2" stroke-width="2.4"/>
<path d="M1236,338.4 L1240.2,340.8 L1242.6,345 L1240.2,349.2 L1236,351.6 L1231.8,349.2 L1229.4,345 L1231.8,340.8 Z" fill="#ffffff" stroke="#c2c2c2" stroke-width="2.4"/>
<path d="M820,805.7 L825.0,808.0 L827.3,813 L825.0,818.0 L820,820.3 L815.0,818.0 L812.7,813 L815.0,808.0 Z" fill="#0a6ec8"/>
<path d="M852,805.7 L857.0,808.0 L859.3,813 L857.0,818.0 L852,820.3 L847.0,818.0 L844.7,813 L847.0,808.0 Z" fill="#0a6ec8"/>
<path d="M1012,806.4 L1016.2,808.8 L1018.6,813 L1016.2,817.2 L1012,819.6 L1007.8,817.2 L1005.4,813 L1007.8,808.8 Z" fill="#ffffff" stroke="#c2c2c2" stroke-width="2.4"/>
<path d="M1076,806.4 L1080.2,808.8 L1082.6,813 L1080.2,817.2 L1076,819.6 L1071.8,817.2 L1069.4,813 L1071.8,808.8 Z" fill="#ffffff" stroke="#c2c2c2" stroke-width="2.4"/>
<path d="M1172,806.4 L1176.2,808.8 L1178.6,813 L1176.2,817.2 L1172,819.6 L1167.8,817.2 L1165.4,813 L1167.8,808.8 Z" fill="#ffffff" stroke="#c2c2c2" stroke-width="2.4"/>
<path d="M1236,806.4 L1240.2,808.8 L1242.6,813 L1240.2,817.2 L1236,819.6 L1231.8,817.2 L1229.4,813 L1231.8,808.8 Z" fill="#ffffff" stroke="#c2c2c2" stroke-width="2.4"/>
<path d="M820,913.7 L825.0,916.0 L827.3,921 L825.0,926.0 L820,928.3 L815.0,926.0 L812.7,921 L815.0,916.0 Z" fill="#0a6ec8"/>
<path d="M852,913.7 L857.0,916.0 L859.3,921 L857.0,926.0 L852,928.3 L847.0,926.0 L844.7,921 L847.0,916.0 Z" fill="#0a6ec8"/>
<path d="M1012,914.4 L1016.2,916.8 L1018.6,921 L1016.2,925.2 L1012,927.6 L1007.8,925.2 L1005.4,921 L1007.8,916.8 Z" fill="#ffffff" stroke="#c2c2c2" stroke-width="2.4"/>
<path d="M1076,914.4 L1080.2,916.8 L1082.6,921 L1080.2,925.2 L1076,927.6 L1071.8,925.2 L1069.4,921 L1071.8,916.8 Z" fill="#ffffff" stroke="#c2c2c2" stroke-width="2.4"/>
<path d="M1172,914.4 L1176.2,916.8 L1178.6,921 L1176.2,925.2 L1172,927.6 L1167.8,925.2 L1165.4,921 L1167.8,916.8 Z" fill="#ffffff" stroke="#c2c2c2" stroke-width="2.4"/>
<path d="M1236,914.4 L1240.2,916.8 L1242.6,921 L1240.2,925.2 L1236,927.6 L1231.8,925.2 L1229.4,921 L1231.8,916.8 Z" fill="#ffffff" stroke="#c2c2c2" stroke-width="2.4"/>
<path d="M820,1021.7 L825.0,1024.0 L827.3,1029 L825.0,1034.0 L820,1036.3 L815.0,1034.0 L812.7,1029 L815.0,1024.0 Z" fill="#0a6ec8"/>
<path d="M852,1021.7 L857.0,1024.0 L859.3,1029 L857.0,1034.0 L852,1036.3 L847.0,1034.0 L844.7,1029 L847.0,1024.0 Z" fill="#0a6ec8"/>
<path d="M1012,1022.4 L1016.2,1024.8 L1018.6,1029 L1016.2,1033.2 L1012,1035.6 L1007.8,1033.2 L1005.4,1029 L1007.8,1024.8 Z" fill="#ffffff" stroke="#c2c2c2" stroke-width="2.4"/>
<path d="M1076,1022.4 L1080.2,1024.8 L1082.6,1029 L1080.2,1033.2 L1076,1035.6 L1071.8,1033.2 L1069.4,1029 L1071.8,1024.8 Z" fill="#ffffff" stroke="#c2c2c2" stroke-width="2.4"/>
<path d="M1172,1022.4 L1176.2,1024.8 L1178.6,1029 L1176.2,1033.2 L1172,1035.6 L1167.8,1033.2 L1165.4,1029 L1167.8,1024.8 Z" fill="#ffffff" stroke="#c2c2c2" stroke-width="2.4"/>
<path d="M1236,1022.4 L1240.2,1024.8 L1242.6,1029 L1240.2,1033.2 L1236,1035.6 L1231.8,1033.2 L1229.4,1029 L1231.8,1024.8 Z" fill="#ffffff" stroke="#c2c2c2" stroke-width="2.4"/>
<path d="M820,1129.7 L825.0,1132.0 L827.3,1137 L825.0,1142.0 L820,1144.3 L815.0,1142.0 L812.7,1137 L815.0,1132.0 Z" fill="#0a6ec8"/>
<path d="M852,1129.7 L857.0,1132.0 L859.3,1137 L857.0,1142.0 L852,1144.3 L847.0,1142.0 L844.7,1137 L847.0,1132.0 Z" fill="#0a6ec8"/>
<path d="M1012,1130.4 L1016.2,1132.8 L1018.6,1137 L1016.2,1141.2 L1012,1143.6 L1007.8,1141.2 L1005.4,1137 L1007.8,1132.8 Z" fill="#ffffff" stroke="#c2c2c2" stroke-width="2.4"/>
<path d="M1076,1130.4 L1080.2,1132.8 L1082.6,1137 L1080.2,1141.2 L1076,1143.6 L1071.8,1141.2 L1069.4,1137 L1071.8,1132.8 Z" fill="#ffffff" stroke="#c2c2c2" stroke-width="2.4"/>
<path d="M1172,1130.4 L1176.2,1132.8 L1178.6,1137 L1176.2,1141.2 L1172,1143.6 L1167.8,1141.2 L1165.4,1137 L1167.8,1132.8 Z" fill="#ffffff" stroke="#c2c2c2" stroke-width="2.4"/>
<path d="M1236,1130.4 L1240.2,1132.8 L1242.6,1137 L1240.2,1141.2 L1236,1143.6 L1231.8,1141.2 L1229.4,1137 L1231.8,1132.8 Z" fill="#ffffff" stroke="#c2c2c2" stroke-width="2.4"/>
<path d="M820,1237.7 L825.0,1240.0 L827.3,1245 L825.0,1250.0 L820,1252.3 L815.0,1250.0 L812.7,1245 L815.0,1240.0 Z" fill="#0a6ec8"/>
<path d="M852,1237.7 L857.0,1240.0 L859.3,1245 L857.0,1250.0 L852,1252.3 L847.0,1250.0 L844.7,1245 L847.0,1240.0 Z" fill="#0a6ec8"/>
<path d="M1012,1238.4 L1016.2,1240.8 L1018.6,1245 L1016.2,1249.2 L1012,1251.6 L1007.8,1249.2 L1005.4,1245 L1007.8,1240.8 Z" fill="#ffffff" stroke="#c2c2c2" stroke-width="2.4"/>
<path d="M1076,1238.4 L1080.2,1240.8 L1082.6,1245 L1080.2,1249.2 L1076,1251.6 L1071.8,1249.2 L1069.4,1245 L1071.8,1240.8 Z" fill="#ffffff" stroke="#c2c2c2" stroke-width="2.4"/>
<path d="M1172,1238.4 L1176.2,1240.8 L1178.6,1245 L1176.2,1249.2 L1172,1251.6 L1167.8,1249.2 L1165.4,1245 L1167.8,1240.8 Z" fill="#ffffff" stroke="#c2c2c2" stroke-width="2.4"/>
<path d="M1236,1238.4 L1240.2,1240.8 L1242.6,1245 L1240.2,1249.2 L1236,1251.6 L1231.8,1249.2 L1229.4,1245 L1231.8,1240.8 Z" fill="#ffffff" stroke="#c2c2c2" stroke-width="2.4"/>
<path d="M916,302.4 L920.2,304.8 L922.6,309 L920.2,313.2 L916,315.6 L911.8,313.2 L909.4,309 L911.8,304.8 Z" fill="#ffffff" stroke="#c2c2c2" stroke-width="2.4"/>
<path d="M1044,302.4 L1048.2,304.8 L1050.6,309 L1048.2,313.2 L1044,315.6 L1039.8,313.2 L1037.4,309 L1039.8,304.8 Z" fill="#ffffff" stroke="#c2c2c2" stroke-width="2.4"/>
<path d="M1108,302.4 L1112.2,304.8 L1114.6,309 L1112.2,313.2 L1108,315.6 L1103.8,313.2 L1101.4,309 L1103.8,304.8 Z" fill="#ffffff" stroke="#c2c2c2" stroke-width="2.4"/>
<path d="M1140,302.4 L1144.2,304.8 L1146.6,309 L1144.2,313.2 L1140,315.6 L1135.8,313.2 L1133.4,309 L1135.8,304.8 Z" fill="#ffffff" stroke="#c2c2c2" stroke-width="2.4"/>
<path d="M1204,302.4 L1208.2,304.8 L1210.6,309 L1208.2,313.2 L1204,315.6 L1199.8,313.2 L1197.4,309 L1199.8,304.8 Z" fill="#ffffff" stroke="#c2c2c2" stroke-width="2.4"/>
<path d="M1268,302.4 L1272.2,304.8 L1274.6,309 L1272.2,313.2 L1268,315.6 L1263.8,313.2 L1261.4,309 L1263.8,304.8 Z" fill="#ffffff" stroke="#c2c2c2" stroke-width="2.4"/>
<path d="M852,1418.4 L856.2,1420.8 L858.6,1425 L856.2,1429.2 L852,1431.6 L847.8,1429.2 L845.4,1425 L847.8,1420.8 Z" fill="#ffffff" stroke="#c2c2c2" stroke-width="2.4"/>
<path d="M1012,1418.4 L1016.2,1420.8 L1018.6,1425 L1016.2,1429.2 L1012,1431.6 L1007.8,1429.2 L1005.4,1425 L1007.8,1420.8 Z" fill="#ffffff" stroke="#c2c2c2" stroke-width="2.4"/>
<path d="M1076,1418.4 L1080.2,1420.8 L1082.6,1425 L1080.2,1429.2 L1076,1431.6 L1071.8,1429.2 L1069.4,1425 L1071.8,1420.8 Z" fill="#ffffff" stroke="#c2c2c2" stroke-width="2.4"/>
<path d="M1172,1418.4 L1176.2,1420.8 L1178.6,1425 L1176.2,1429.2 L1172,1431.6 L1167.8,1429.2 L1165.4,1425 L1167.8,1420.8 Z" fill="#ffffff" stroke="#c2c2c2" stroke-width="2.4"/>
<path d="M1236,1418.4 L1240.2,1420.8 L1242.6,1425 L1240.2,1429.2 L1236,1431.6 L1231.8,1429.2 L1229.4,1425 L1231.8,1420.8 Z" fill="#ffffff" stroke="#c2c2c2" stroke-width="2.4"/>
<path d="M1044,1057.7 L1049.0,1060.0 L1051.3,1065 L1049.0,1070.0 L1044,1072.3 L1039.0,1070.0 L1036.7,1065 L1039.0,1060.0 Z" fill="#0a6ec8"/>
<path d="M1268,1165.7 L1273.0,1168.0 L1275.3,1173 L1273.0,1178.0 L1268,1180.3 L1263.0,1178.0 L1260.7,1173 L1263.0,1168.0 Z" fill="#0a6ec8"/>
<path d="M1204,1273.7 L1209.0,1276.0 L1211.3,1281 L1209.0,1286.0 L1204,1288.3 L1199.0,1286.0 L1196.7,1281 L1199.0,1276.0 Z" fill="#0a6ec8"/>
<path d="M884,1058.4 L888.2,1060.8 L890.6,1065 L888.2,1069.2 L884,1071.6 L879.8,1069.2 L877.4,1065 L879.8,1060.8 Z" fill="#ffffff" stroke="#c2c2c2" stroke-width="2.4"/>
<path d="M916,1058.4 L920.2,1060.8 L922.6,1065 L920.2,1069.2 L916,1071.6 L911.8,1069.2 L909.4,1065 L911.8,1060.8 Z" fill="#ffffff" stroke="#c2c2c2" stroke-width="2.4"/>
<path d="M1108,1058.4 L1112.2,1060.8 L1114.6,1065 L1112.2,1069.2 L1108,1071.6 L1103.8,1069.2 L1101.4,1065 L1103.8,1060.8 Z" fill="#ffffff" stroke="#c2c2c2" stroke-width="2.4"/>
<path d="M1140,1058.4 L1144.2,1060.8 L1146.6,1065 L1144.2,1069.2 L1140,1071.6 L1135.8,1069.2 L1133.4,1065 L1135.8,1060.8 Z" fill="#ffffff" stroke="#c2c2c2" stroke-width="2.4"/>
<path d="M1204,1058.4 L1208.2,1060.8 L1210.6,1065 L1208.2,1069.2 L1204,1071.6 L1199.8,1069.2 L1197.4,1065 L1199.8,1060.8 Z" fill="#ffffff" stroke="#c2c2c2" stroke-width="2.4"/>
<path d="M1268,1058.4 L1272.2,1060.8 L1274.6,1065 L1272.2,1069.2 L1268,1071.6 L1263.8,1069.2 L1261.4,1065 L1263.8,1060.8 Z" fill="#ffffff" stroke="#c2c2c2" stroke-width="2.4"/>
<path d="M884,1166.4 L888.2,1168.8 L890.6,1173 L888.2,1177.2 L884,1179.6 L879.8,1177.2 L877.4,1173 L879.8,1168.8 Z" fill="#ffffff" stroke="#c2c2c2" stroke-width="2.4"/>
<path d="M916,1166.4 L920.2,1168.8 L922.6,1173 L920.2,1177.2 L916,1179.6 L911.8,1177.2 L909.4,1173 L911.8,1168.8 Z" fill="#ffffff" stroke="#c2c2c2" stroke-width="2.4"/>
<path d="M1044,1166.4 L1048.2,1168.8 L1050.6,1173 L1048.2,1177.2 L1044,1179.6 L1039.8,1177.2 L1037.4,1173 L1039.8,1168.8 Z" fill="#ffffff" stroke="#c2c2c2" stroke-width="2.4"/>
<path d="M1108,1166.4 L1112.2,1168.8 L1114.6,1173 L1112.2,1177.2 L1108,1179.6 L1103.8,1177.2 L1101.4,1173 L1103.8,1168.8 Z" fill="#ffffff" stroke="#c2c2c2" stroke-width="2.4"/>
<path d="M1140,1166.4 L1144.2,1168.8 L1146.6,1173 L1144.2,1177.2 L1140,1179.6 L1135.8,1177.2 L1133.4,1173 L1135.8,1168.8 Z" fill="#ffffff" stroke="#c2c2c2" stroke-width="2.4"/>
<path d="M1204,1166.4 L1208.2,1168.8 L1210.6,1173 L1208.2,1177.2 L1204,1179.6 L1199.8,1177.2 L1197.4,1173 L1199.8,1168.8 Z" fill="#ffffff" stroke="#c2c2c2" stroke-width="2.4"/>
<path d="M884,1274.4 L888.2,1276.8 L890.6,1281 L888.2,1285.2 L884,1287.6 L879.8,1285.2 L877.4,1281 L879.8,1276.8 Z" fill="#ffffff" stroke="#c2c2c2" stroke-width="2.4"/>
<path d="M916,1274.4 L920.2,1276.8 L922.6,1281 L920.2,1285.2 L916,1287.6 L911.8,1285.2 L909.4,1281 L911.8,1276.8 Z" fill="#ffffff" stroke="#c2c2c2" stroke-width="2.4"/>
<path d="M1044,1274.4 L1048.2,1276.8 L1050.6,1281 L1048.2,1285.2 L1044,1287.6 L1039.8,1285.2 L1037.4,1281 L1039.8,1276.8 Z" fill="#ffffff" stroke="#c2c2c2" stroke-width="2.4"/>
<path d="M1108,1274.4 L1112.2,1276.8 L1114.6,1281 L1112.2,1285.2 L1108,1287.6 L1103.8,1285.2 L1101.4,1281 L1103.8,1276.8 Z" fill="#ffffff" stroke="#c2c2c2" stroke-width="2.4"/>
<path d="M1140,1274.4 L1144.2,1276.8 L1146.6,1281 L1144.2,1285.2 L1140,1287.6 L1135.8,1285.2 L1133.4,1281 L1135.8,1276.8 Z" fill="#ffffff" stroke="#c2c2c2" stroke-width="2.4"/>
<path d="M1268,1274.4 L1272.2,1276.8 L1274.6,1281 L1272.2,1285.2 L1268,1287.6 L1263.8,1285.2 L1261.4,1281 L1263.8,1276.8 Z" fill="#ffffff" stroke="#c2c2c2" stroke-width="2.4"/>
</g></svg>
<line x1="629" y1="1667" x2="643" y2="1679" stroke="#e04848" stroke-width="1.8"/>
<line x1="643" y1="1667" x2="629" y2="1679" stroke="#e04848" stroke-width="1.8"/>
<path d="M629.5,1688.7 a6.5,6.5 0 1,0 13,0 a6.5,6.5 0 1,0 -13,0 Z" fill="#10a0f0"/>
<rect x="634.8" y="1685" width="2.4" height="7" fill="#fff"/>
<rect x="647.4" y="1670" width="9.5" height="2.5" fill="#1a48a8"/>
<rect x="647.4" y="1678" width="9.5" height="2.5" fill="#1a48a8"/>
<rect x="647.4" y="1686" width="9.5" height="2.5" fill="#1a48a8"/>
<rect x="647.4" y="1693" width="9.5" height="2.5" fill="#1a48a8"/>
<rect x="618" y="1712.5" width="1988" height="464" fill="#ffffff"/>
<rect x="618" y="1712.5" width="1988" height="33" fill="#eeeeee"/>
<rect x="618" y="1712" width="1988" height="1.5" fill="#9aa8b8"/>
<rect x="618" y="1744.5" width="1988" height="2.2" fill="#7d8a98"/>
<rect x="617.5" y="1712" width="1.5" height="465" fill="#9aa8b8"/>
<rect x="2604" y="1712" width="1.5" height="465" fill="#9aa8b8"/>
<rect x="767.2" y="1713" width="2" height="298" fill="#7d8a98"/>
<rect x="1108.5" y="1713" width="2" height="298" fill="#7d8a98"/>
<text x="700" y="1738" font-size="21.7" fill="#2a2a2a" text-anchor="middle">Type</text>
<text x="945" y="1738" font-size="21.7" fill="#2a2a2a" text-anchor="middle">Path</text>
<text x="1863.7" y="1738" font-size="21.7" fill="#2a2a2a" text-anchor="middle">Message</text>
<rect x="618" y="1790" width="1988" height="2" fill="#7d8a98"/>
<rect x="618" y="1834" width="1988" height="2" fill="#7d8a98"/>
<rect x="618" y="1878" width="1988" height="2" fill="#7d8a98"/>
<rect x="618" y="1922" width="1988" height="2" fill="#7d8a98"/>
<rect x="618" y="1966" width="1988" height="2" fill="#7d8a98"/>
<rect x="618" y="2010" width="1988" height="2" fill="#7d8a98"/>
<text x="774.3" y="1776" font-size="21.7" fill="#1414c8">1 Component Instantiation War...</text>
<text x="774.3" y="1820" font-size="21.1" fill="#1414c8" font-weight="bold">qsys_top.emif_hps</text>
<text x="1115.4" y="1820" font-size="21.7" fill="#1414c8">Warnings found in IP parameterization.</text>
<text x="774.3" y="1864" font-size="21.7" fill="#1414c8">1 System Connectivity Warning</text>
<text x="774.3" y="1908" font-size="21.1" fill="#1414c8" font-weight="bold">qsys_top.a10_hps</text>
<text x="1115.4" y="1908" font-size="21.7" fill="#1414c8">HPS model no longer supports simulation for HPS FPGA Bridges.</text>
<text x="774.3" y="1952" font-size="21.7" fill="#0a7a0a">1 Info Message</text>
<text x="774.3" y="1996" font-size="21.1" fill="#0a7a0a" font-weight="bold">qsys_top.a10_hps</text>
<text x="1115.4" y="1996" font-size="21.7" fill="#0a7a0a">HPS NOC (L3 clock) is set to 200 MHz When the Max Speed for this part is 400 MHz.</text>
<path d="M633,1766.4 a4,4 0 1,0 8,0 a4,4 0 1,0 -8,0 Z" fill="#fff" stroke="#6a80c0" stroke-width="3.2"/>
<rect x="635.4" y="1770.4" width="3.4" height="10" fill="#6a80c0"/>
<path d="M672.8,1754 L688.3,1781 L657.3,1781 Z" fill="#f0a050" stroke="#d86018" stroke-width="2.2"/>
<rect x="670.8" y="1764" width="4" height="8" fill="#7a3a10"/>
<rect x="670.8" y="1774" width="4" height="3" fill="#7a3a10"/>
<path d="M708.5,1798 L724,1825 L693,1825 Z" fill="#f0a050" stroke="#d86018" stroke-width="2.2"/>
<rect x="706.5" y="1808" width="4" height="8" fill="#7a3a10"/>
<rect x="706.5" y="1818" width="4" height="3" fill="#7a3a10"/>
<path d="M633,1854.4 a4,4 0 1,0 8,0 a4,4 0 1,0 -8,0 Z" fill="#fff" stroke="#6a80c0" stroke-width="3.2"/>
<rect x="635.4" y="1858.4" width="3.4" height="10" fill="#6a80c0"/>
<path d="M672.8,1842 L688.3,1869 L657.3,1869 Z" fill="#f8e070" stroke="#e0a030" stroke-width="2.2"/>
<rect x="670.8" y="1852" width="4" height="8" fill="#a07020"/>
<rect x="670.8" y="1862" width="4" height="3" fill="#a07020"/>
<path d="M708.5,1886 L724,1913 L693,1913 Z" fill="#f8e070" stroke="#e0a030" stroke-width="2.2"/>
<rect x="706.5" y="1896" width="4" height="8" fill="#a07020"/>
<rect x="706.5" y="1906" width="4" height="3" fill="#a07020"/>
<path d="M633,1942.4 a4,4 0 1,0 8,0 a4,4 0 1,0 -8,0 Z" fill="#fff" stroke="#6a80c0" stroke-width="3.2"/>
<rect x="635.4" y="1946.4" width="3.4" height="10" fill="#6a80c0"/>
<path d="M659.8,1943.8 a13,13 0 1,0 26,0 a13,13 0 1,0 -26,0 Z" fill="#6a9ad8" stroke="#3a62a8" stroke-width="2"/>
<rect x="670.8" y="1940.8" width="4.5" height="11" fill="#fff"/>
<rect x="670.8" y="1934.8" width="4.5" height="4" fill="#fff"/>
<path d="M695.8,1987.7 a13,13 0 1,0 26,0 a13,13 0 1,0 -26,0 Z" fill="#6a9ad8" stroke="#3a62a8" stroke-width="2"/>
<rect x="706.8" y="1984.7" width="4.5" height="11" fill="#fff"/>
<rect x="706.8" y="1978.7" width="4.5" height="4" fill="#fff"/>
<rect x="2640" y="75" width="10" height="20" fill="#c0c0c0"/>
<rect x="2643" y="92" width="24" height="6" fill="#c0c0c0"/>
<rect x="2650" y="64" width="20" height="20" fill="#10a0f0"/>
<line x1="2646" y1="62" x2="2667" y2="83" stroke="#f0a820" stroke-width="4.5"/>
<path d="M2642,60 a4,4 0 1,0 8,0 a4,4 0 1,0 -8,0 Z" fill="#e82020"/>
<text x="2630" y="126.2" font-size="21.1" fill="#2a2a2a" font-weight="bold">System:</text>
<text x="2727.8" y="126.2" font-size="21.7" fill="#2a2a2a">qsys_top</text>
<text x="2848" y="126.2" font-size="21.1" fill="#2a2a2a" font-weight="bold">Path:</text>
<text x="2915.8" y="126.2" font-size="21.7" fill="#2a2a2a">a10_hps</text>
<rect x="2630" y="131.5" width="1230" height="2.2" fill="#8a8a8a"/>
<defs><linearGradient id="hdrg" x1="0" y1="0" x2="1" y2="0"><stop offset="0" stop-color="#ffffff"/><stop offset="0.396" stop-color="#ffffff"/><stop offset="0.48" stop-color="#dfe9f3"/><stop offset="0.646" stop-color="#b4cee6"/><stop offset="0.812" stop-color="#85b0da"/><stop offset="1" stop-color="#3f7ec0"/></linearGradient></defs>
<rect x="2643.6" y="147.8" width="1185.4" height="198" fill="url(#hdrg)"/>
<text x="2658.2" y="248" font-size="36" fill="#2a2a2a">Hard Processor System FPGA IP</text>
<text x="2658.2" y="275.4" font-size="21.4" fill="#2a2a2a">altera_arria10_hps</text>
<rect x="3683.5" y="163.5" width="131" height="42" fill="url(#btng)" stroke="#7f95b3" stroke-width="2"/>
<text x="3749" y="192" font-size="21.7" fill="#2a2a2a" text-anchor="middle">Details</text>
<rect x="3716" y="196" width="15" height="1.6" fill="#222"/>
<rect x="2643.6" y="345.5" width="1183" height="2" fill="#9a9a9a"/>
<rect x="2643.6" y="345.5" width="2" height="1159" fill="#b0b0b0"/>
<rect x="3825.5" y="345.5" width="2" height="1159" fill="#b0b0b0"/>
<rect x="2656" y="393" width="1141" height="2.2" fill="#6a84b8"/>
<rect x="2658" y="395" width="1139" height="6" fill="#c6daf0"/>
<rect x="2656" y="393" width="2" height="1082" fill="#7e98c8"/>
<rect x="2658" y="395" width="4" height="1080" fill="#c6daf0"/>
<path d="M2660,394 L2660,367 L2667,359.5 L2863,359.5 L2863,394 Z" fill="#c4d8ee" stroke="#6a84b8" stroke-width="2.2"/>
<path d="M2865,367 L2872,359.5 L3129.8,359.5 L3129.8,393" fill="#eeeeee" stroke="#7a8a9c" stroke-width="2"/>
<path d="M3131.8,367 L3139,359.5 L3254,359.5 L3254,393" fill="#eeeeee" stroke="#7a8a9c" stroke-width="2"/>
<path d="M3256,367 L3263,359.5 L3526.3,359.5 L3526.3,393" fill="#eeeeee" stroke="#7a8a9c" stroke-width="2"/>
<text x="2681.7" y="384.9" font-size="21.7" fill="#2a2a2a">FPGA Interfaces</text>
<text x="2884.2" y="384.9" font-size="21.7" fill="#2a2a2a">HPS Clocks and resets</text>
<text x="3151.4" y="384.9" font-size="21.7" fill="#2a2a2a">SDRAM</text>
<text x="3274.2" y="384.9" font-size="21.7" fill="#2a2a2a">Pin Mux and Peripherals</text>
<svg x="2658" y="401" width="1139" height="1074" overflow="hidden"><g transform="translate(-2658,-401)">
<rect x="2670" y="411" width="1127" height="28.5" fill="#b8cfe6" stroke="#8a8a8a" stroke-width="2"/>
<path d="M2675,418 L2689,418 L2682,426 Z" fill="#6a7a8a"/>
<text x="2699.5" y="432" font-size="21.1" fill="#2a2a2a" font-weight="bold">General</text>
<rect x="2697.5" y="458.1" width="23" height="23" fill="url(#cbg)" stroke="#7d90a6" stroke-width="2.4"/>
<text x="2732" y="477.6" font-size="21.7" fill="#2a2a2a">Enable MPU standby and event signals</text>
<rect x="2697.5" y="514.2" width="23" height="23" fill="url(#cbg)" stroke="#7d90a6" stroke-width="2.4"/>
<text x="2732" y="533.7" font-size="21.7" fill="#2a2a2a">Enable general purpose signals</text>
<rect x="2697.5" y="570.3000000000001" width="23" height="23" fill="url(#cbg)" stroke="#7d90a6" stroke-width="2.4"/>
<text x="2732" y="589.8000000000001" font-size="21.7" fill="#2a2a2a">Enable Debug APB interface</text>
<rect x="2697.5" y="626.4000000000001" width="23" height="23" fill="url(#cbg)" stroke="#7d90a6" stroke-width="2.4"/>
<path d="M2703.0,636.4000000000001 L2707.3,636.4000000000001 L2707.3,639.9000000000001 L2716.0,630.9000000000001 L2718.0,632.9000000000001 L2707.5,645.9000000000001 L2703.0,645.9000000000001 Z" fill="#2a2a2a"/>
<text x="2732" y="645.9000000000001" font-size="21.7" fill="#2a2a2a">Enable System Trace Macrocell hardware events</text>
<rect x="2697.5" y="682.5" width="23" height="23" fill="url(#cbg)" stroke="#7d90a6" stroke-width="2.4"/>
<text x="2732" y="702.0" font-size="21.7" fill="#2a2a2a">Enable FPGA Cross Trigger Interface</text>
<rect x="2670" y="745" width="1127" height="28.399999999999977" fill="#b8cfe6" stroke="#8a8a8a" stroke-width="2"/>
<path d="M2675,752 L2689,752 L2682,760 Z" fill="#6a7a8a"/>
<text x="2699.5" y="765" font-size="21.1" fill="#2a2a2a" font-weight="bold">Boot and Clock Selection</text>
<rect x="2697.5" y="791.6" width="23" height="23" fill="url(#cbg)" stroke="#7d90a6" stroke-width="2.4"/>
<text x="2732" y="811.4" font-size="21.7" fill="#2a2a2a">Enable boot from fpga signals</text>
<rect x="2697.5" y="847.5" width="23" height="23" fill="url(#cbg)" stroke="#7d90a6" stroke-width="2.4"/>
<text x="2732" y="867" font-size="21.7" fill="#2a2a2a">Enable boot selection from FPGA</text>
<text x="2690" y="922.3" font-size="21.7" fill="#2a2a2a">Boot selection from FPGA:</text>
<rect x="3105.7" y="890.3" width="428.0" height="49.30000000000007" fill="#eeeeee" stroke="#a8b8d0" stroke-width="2"/>
<rect x="3107.7" y="892.3" width="386.0" height="45.30000000000007" fill="none" stroke="#88a8d8" stroke-width="2"/>
<text x="3111.7" y="922" font-size="21.7" fill="#b8c8dc">FPGA</text>
<path d="M3504.7,911.95 L3522.7,911.95 L3513.7,920.95 Z" fill="#9cc0ec"/>
<rect x="2670" y="966.5" width="1127" height="28.5" fill="#b8cfe6" stroke="#8a8a8a" stroke-width="2"/>
<path d="M2675,973.5 L2689,973.5 L2682,981.5 Z" fill="#6a7a8a"/>
<text x="2699.5" y="987" font-size="21.1" fill="#2a2a2a" font-weight="bold">HPS FPGA Bridge</text>
<text x="2690" y="1034" font-size="21.7" fill="#2a2a2a">FPGA-to-HPS interface width:</text>
<rect x="3105.7" y="1001" width="428.0" height="49" fill="url(#btng)" stroke="#7f95b3" stroke-width="2"/>
<rect x="3107.7" y="1003" width="387.0" height="45" fill="#eeeeee"/>
<rect x="3494.7" y="1002" width="2" height="47" fill="#7f95b3"/>
<text x="3111.7" y="1031.5" font-size="21.7" fill="#2a2a2a">128-bit AXI (ready latency support)</text>
<path d="M3504.7,1021.5 L3522.7,1021.5 L3513.7,1031.5 Z" fill="#222"/>
<text x="2690" y="1089.2" font-size="21.7" fill="#2a2a2a">HPS-to-FPGA interface width:</text>
<rect x="3105.7" y="1057" width="428.0" height="49" fill="url(#btng)" stroke="#7f95b3" stroke-width="2"/>
<rect x="3107.7" y="1059" width="387.0" height="45" fill="#eeeeee"/>
<rect x="3494.7" y="1058" width="2" height="47" fill="#7f95b3"/>
<text x="3111.7" y="1086.7" font-size="21.7" fill="#2a2a2a">32-bit AXI (ready latency support)</text>
<path d="M3504.7,1077.5 L3522.7,1077.5 L3513.7,1087.5 Z" fill="#222"/>
<text x="2690" y="1145" font-size="21.7" fill="#2a2a2a">Lightweight HPS-to-FPGA interface width:</text>
<rect x="3105.7" y="1113" width="428.0" height="49" fill="url(#btng)" stroke="#7f95b3" stroke-width="2"/>
<rect x="3107.7" y="1115" width="387.0" height="45" fill="#eeeeee"/>
<rect x="3494.7" y="1114" width="2" height="47" fill="#7f95b3"/>
<text x="3111.7" y="1142.5" font-size="21.7" fill="#2a2a2a">32-bit AXI (ready latency support)</text>
<path d="M3504.7,1133.5 L3522.7,1133.5 L3513.7,1143.5 Z" fill="#222"/>
<rect x="2670" y="1189.3" width="1127" height="28.100000000000136" fill="#b8cfe6" stroke="#8a8a8a" stroke-width="2"/>
<path d="M2675,1196.3 L2689,1196.3 L2682,1204.3 Z" fill="#6a7a8a"/>
<text x="2699.5" y="1210" font-size="21.1" fill="#2a2a2a" font-weight="bold">FPGA-to-HPS SDRAM Interface</text>
<rect x="2691.5" y="1224.8" width="648.5" height="237.5" fill="#eeeeee" stroke="#111" stroke-width="2"/>
<rect x="2698.4" y="1231" width="201.5999999999999" height="38.5" fill="#eeeeee" stroke="#111" stroke-width="2"/>
<rect x="2699.4" y="1268.5" width="200.5999999999999" height="1.5" fill="#b0b0b0"/>
<rect x="2899" y="1232" width="1.5" height="37" fill="#b0b0b0"/>
<text x="2706.4" y="1258.3" font-size="21.1" fill="#2a2a2a" font-weight="bold">Port Configuration</text>
<rect x="2907" y="1231" width="136" height="38.5" fill="#eeeeee" stroke="#111" stroke-width="2"/>
<rect x="2908" y="1268.5" width="135" height="1.5" fill="#b0b0b0"/>
<rect x="3042" y="1232" width="1.5" height="37" fill="#b0b0b0"/>
<text x="2915" y="1258.3" font-size="21.7" fill="#2a2a2a">F2SDRAM 0</text>
<rect x="3051" y="1231" width="136.5" height="38.5" fill="#eeeeee" stroke="#111" stroke-width="2"/>
<rect x="3052" y="1268.5" width="135.5" height="1.5" fill="#b0b0b0"/>
<rect x="3186.5" y="1232" width="1.5" height="37" fill="#b0b0b0"/>
<text x="3059" y="1258.3" font-size="21.7" fill="#2a2a2a">F2SDRAM 1</text>
<rect x="3194.5" y="1231" width="137.0" height="38.5" fill="#eeeeee" stroke="#111" stroke-width="2"/>
<rect x="3195.5" y="1268.5" width="136.0" height="1.5" fill="#b0b0b0"/>
<rect x="3330.5" y="1232" width="1.5" height="37" fill="#b0b0b0"/>
<text x="3202.5" y="1258.3" font-size="21.7" fill="#2a2a2a">F2SDRAM 2</text>
<rect x="2698.4" y="1277" width="201.5999999999999" height="38.5" fill="#eeeeee" stroke="#111" stroke-width="2"/>
<rect x="2699.4" y="1314.5" width="200.5999999999999" height="1.5" fill="#b0b0b0"/>
<rect x="2899" y="1278" width="1.5" height="37" fill="#b0b0b0"/>
<text x="2706.4" y="1304.3" font-size="21.7" fill="#2a2a2a">1</text>
<rect x="2907" y="1277" width="136" height="38.5" fill="#eeeeee" stroke="#111" stroke-width="2"/>
<rect x="2908" y="1314.5" width="135" height="1.5" fill="#b0b0b0"/>
<rect x="3042" y="1278" width="1.5" height="37" fill="#b0b0b0"/>
<text x="2915" y="1304.3" font-size="21.7" fill="#2a2a2a">AXI-32</text>
<rect x="3051" y="1277" width="136.5" height="38.5" fill="#eeeeee" stroke="#111" stroke-width="2"/>
<rect x="3052" y="1314.5" width="135.5" height="1.5" fill="#b0b0b0"/>
<rect x="3186.5" y="1278" width="1.5" height="37" fill="#b0b0b0"/>
<text x="3059" y="1304.3" font-size="21.7" fill="#2a2a2a">AXI-32</text>
<rect x="3194.5" y="1277" width="137.0" height="38.5" fill="#eeeeee" stroke="#111" stroke-width="2"/>
<rect x="3195.5" y="1314.5" width="136.0" height="1.5" fill="#b0b0b0"/>
<rect x="3330.5" y="1278" width="1.5" height="37" fill="#b0b0b0"/>
<text x="3202.5" y="1304.3" font-size="21.7" fill="#2a2a2a">AXI-32</text>
<rect x="2698.4" y="1323" width="201.5999999999999" height="38.5" fill="#eeeeee" stroke="#111" stroke-width="2"/>
<rect x="2699.4" y="1360.5" width="200.5999999999999" height="1.5" fill="#b0b0b0"/>
<rect x="2899" y="1324" width="1.5" height="37" fill="#b0b0b0"/>
<text x="2706.4" y="1350.3" font-size="21.7" fill="#2a2a2a">2</text>
<rect x="2907" y="1323" width="136" height="38.5" fill="#eeeeee" stroke="#111" stroke-width="2"/>
<rect x="2908" y="1360.5" width="135" height="1.5" fill="#b0b0b0"/>
<rect x="3042" y="1324" width="1.5" height="37" fill="#b0b0b0"/>
<text x="2915" y="1350.3" font-size="21.7" fill="#2a2a2a">AXI-64</text>
<rect x="3051" y="1323" width="136.5" height="38.5" fill="#eeeeee" stroke="#111" stroke-width="2"/>
<rect x="3052" y="1360.5" width="135.5" height="1.5" fill="#b0b0b0"/>
<rect x="3186.5" y="1324" width="1.5" height="37" fill="#b0b0b0"/>
<text x="3059" y="1350.3" font-size="21.7" fill="#2a2a2a">AXI-64</text>
<rect x="3194.5" y="1323" width="137.0" height="38.5" fill="#eeeeee" stroke="#111" stroke-width="2"/>
<rect x="3195.5" y="1360.5" width="136.0" height="1.5" fill="#b0b0b0"/>
<rect x="3330.5" y="1324" width="1.5" height="37" fill="#b0b0b0"/>
<text x="3202.5" y="1350.3" font-size="21.7" fill="#2a2a2a">AXI-64</text>
<rect x="2698.4" y="1369" width="201.5999999999999" height="38.5" fill="#eeeeee" stroke="#111" stroke-width="2"/>
<rect x="2699.4" y="1406.5" width="200.5999999999999" height="1.5" fill="#b0b0b0"/>
<rect x="2899" y="1370" width="1.5" height="37" fill="#b0b0b0"/>
<text x="2706.4" y="1396.3" font-size="21.7" fill="#2a2a2a">3</text>
<rect x="2907" y="1369" width="136" height="38.5" fill="#eeeeee" stroke="#111" stroke-width="2"/>
<rect x="2908" y="1406.5" width="135" height="1.5" fill="#b0b0b0"/>
<rect x="3042" y="1370" width="1.5" height="37" fill="#b0b0b0"/>
<text x="2915" y="1396.3" font-size="21.7" fill="#2a2a2a">AXI-128</text>
<rect x="3051" y="1369" width="136.5" height="38.5" fill="#eeeeee" stroke="#111" stroke-width="2"/>
<rect x="3052" y="1406.5" width="135.5" height="1.5" fill="#b0b0b0"/>
<rect x="3186.5" y="1370" width="1.5" height="37" fill="#b0b0b0"/>
<text x="3059" y="1396.3" font-size="21.7" fill="#2a2a2a">unused</text>
<rect x="3194.5" y="1369" width="137.0" height="38.5" fill="#eeeeee" stroke="#111" stroke-width="2"/>
<rect x="3195.5" y="1406.5" width="136.0" height="1.5" fill="#b0b0b0"/>
<rect x="3330.5" y="1370" width="1.5" height="37" fill="#b0b0b0"/>
<text x="3202.5" y="1396.3" font-size="21.7" fill="#2a2a2a">AXI-128</text>
<rect x="2698.4" y="1415" width="201.5999999999999" height="38.5" fill="#eeeeee" stroke="#111" stroke-width="2"/>
<rect x="2699.4" y="1452.5" width="200.5999999999999" height="1.5" fill="#b0b0b0"/>
<rect x="2899" y="1416" width="1.5" height="37" fill="#b0b0b0"/>
<text x="2706.4" y="1442.3" font-size="21.7" fill="#2a2a2a">4</text>
<rect x="2907" y="1415" width="136" height="38.5" fill="#eeeeee" stroke="#111" stroke-width="2"/>
<rect x="2908" y="1452.5" width="135" height="1.5" fill="#b0b0b0"/>
<rect x="3042" y="1416" width="1.5" height="37" fill="#b0b0b0"/>
<text x="2915" y="1442.3" font-size="21.7" fill="#2a2a2a">AXI-128</text>
<rect x="3051" y="1415" width="136.5" height="38.5" fill="#eeeeee" stroke="#111" stroke-width="2"/>
<rect x="3052" y="1452.5" width="135.5" height="1.5" fill="#b0b0b0"/>
<rect x="3186.5" y="1416" width="1.5" height="37" fill="#b0b0b0"/>
<text x="3059" y="1442.3" font-size="21.7" fill="#2a2a2a">AXI-32</text>
<rect x="3194.5" y="1415" width="137.0" height="38.5" fill="#eeeeee" stroke="#111" stroke-width="2"/>
<rect x="3195.5" y="1452.5" width="136.0" height="1.5" fill="#b0b0b0"/>
<rect x="3330.5" y="1416" width="1.5" height="37" fill="#b0b0b0"/>
<text x="3202.5" y="1442.3" font-size="21.7" fill="#2a2a2a">AXI-64</text>
<rect x="3105.7" y="1468" width="428" height="10" fill="url(#btng)" stroke="#7f95b3" stroke-width="2"/>
</g></svg>
<rect x="3797" y="347" width="28.5" height="1128" fill="#eeeeee"/>
<rect x="3797" y="347" width="1.5" height="1128" fill="#a8b8c8"/>
<rect x="3798" y="349" width="27" height="29" fill="#eeeeee" stroke="#c8d0d8" stroke-width="1"/>
<path d="M3803,369 L3819,369 L3811,359 Z" fill="#222"/>
<rect x="3798" y="1443" width="27" height="30" fill="#eeeeee" stroke="#c8d0d8" stroke-width="1"/>
<path d="M3803,1453 L3819,1453 L3811,1463 Z" fill="#222"/>
<rect x="3799" y="379" width="25" height="283" fill="url(#sbv)" stroke="#7f98c0" stroke-width="2"/>
<rect x="3804" y="517" width="15" height="1.8" fill="#6b84b8"/>
<rect x="3804" y="522" width="15" height="1.8" fill="#6b84b8"/>
<rect x="3804" y="527" width="15" height="1.8" fill="#6b84b8"/>
<rect x="2645.5" y="1475" width="1180" height="29" fill="#eeeeee"/>
<rect x="2645.5" y="1474" width="1152" height="1.5" fill="#a8b8c8"/>
<rect x="2647" y="1476" width="28" height="28" fill="#eeeeee" stroke="#c8d0d8" stroke-width="1"/>
<path d="M2665,1482 L2665,1498 L2655,1490 Z" fill="#222"/>
<rect x="2675.5" y="1476" width="575.5" height="27" fill="url(#sbg)" stroke="#7f98c0" stroke-width="2"/>
<rect x="2957" y="1482" width="1.8" height="16" fill="#6b84b8"/>
<rect x="2962" y="1482" width="1.8" height="16" fill="#6b84b8"/>
<rect x="2967" y="1482" width="1.8" height="16" fill="#6b84b8"/>
<rect x="3764" y="1476" width="29.6" height="28" fill="#eeeeee" stroke="#c8d0d8" stroke-width="1"/>
<path d="M3774,1482 L3774,1498 L3784,1490 Z" fill="#222"/>
<rect x="2643.6" y="1503.5" width="1183" height="2" fill="#b0b0b0"/>
<path d="M2644.5,1565.5 a11.5,11.5 0 1,0 23,0 a11.5,11.5 0 1,0 -23,0 Z" fill="#1a3ca8" stroke="#8cb0f0" stroke-width="2"/>
<path d="M2650.5,1565.5 a5.5,5.5 0 1,0 11,0 a5.5,5.5 0 1,0 -11,0 Z" fill="#2a5ad8" stroke="#c8d8f8" stroke-width="1.2"/>
<rect x="2654" y="1564" width="4" height="4" fill="#f0c020"/>
<line x1="2647" y1="1557" x2="2655" y2="1565" stroke="#f0c020" stroke-width="1.5"/>
<text x="2639" y="1558" font-size="10" fill="#2a5ad8" font-weight="bold">A</text>
<text x="2666" y="1558" font-size="10" fill="#2a5ad8" font-weight="bold">B</text>
<text x="2643.8" y="1628.3" font-size="21.7" fill="#2a2a2a">Presets for a10_hps</text>
<rect x="2651" y="1656" width="23" height="23" fill="url(#cbg)" stroke="#7d90a6" stroke-width="2.4"/>
<path d="M2656.5,1666 L2660.8,1666 L2660.8,1669.5 L2669.5,1660.5 L2671.5,1662.5 L2661,1675.5 L2656.5,1675.5 Z" fill="#2a2a2a"/>
<text x="2686" y="1675.9" font-size="21.7" fill="#2a2a2a" font-style="italic">Show presets for the selected board</text>
<rect x="2651" y="1712" width="23" height="23" fill="url(#cbg)" stroke="#7d90a6" stroke-width="2.4"/>
<text x="2686" y="1731.3" font-size="21.7" fill="#2a2a2a" font-style="italic">Clear preset filters</text>
<rect x="2644.8" y="1761" width="1181" height="34.5" fill="#ffffff" stroke="#a2a2a2" stroke-width="2"/>
<path d="M2651,1777 a8,8 0 1,0 16,0 a8,8 0 1,0 -16,0 Z" fill="#cfe0f4" stroke="#a9c0de" stroke-width="2"/>
<line x1="2666" y1="1785" x2="2673" y2="1792" stroke="#c8904c" stroke-width="4.5"/>
<line x1="3798" y1="1769" x2="3820" y2="1791" stroke="#8c8c8c" stroke-width="5"/>
<line x1="3820" y1="1769" x2="3798" y2="1791" stroke="#8c8c8c" stroke-width="5"/>
<rect x="2644.8" y="1815.5" width="1181" height="267" fill="#ffffff" stroke="#b8c0c8" stroke-width="2"/>
<text x="2646.4" y="1835.4" font-size="21.7" fill="#2a2a2a">Project</text>
<path d="M2659,1843 L2659,1854 L2677,1854" fill="none" stroke="#a8b8c8" stroke-width="2"/>
<text x="2686" y="1860.8" font-size="21.7" fill="#8a8a8a">Click <tspan font-size="21.1" font-weight="bold" fill="#6a6a6a">New...</tspan> to create a preset.</text>
<text x="2646.4" y="1887.2" font-size="21.7" fill="#2a2a2a">Library</text>
<path d="M2659,1895 L2659,1906 L2677,1906" fill="none" stroke="#a8b8c8" stroke-width="2"/>
<text x="2686" y="1913.6" font-size="21.7" fill="#8a8a8a">No presets for <tspan font-size="21.1" font-weight="bold" fill="#6a6a6a">Hard Processor System FPGA IP 19.1</tspan></text>
<rect x="2644" y="2122" width="120" height="41" fill="#eeeeee" stroke="#a8a8a8" stroke-width="2"/>
<text x="2677" y="2148.8" font-size="21.7" fill="#9a9a9a">Apply</text>
<rect x="2785" y="2122" width="133" height="41" fill="#eeeeee" stroke="#a8a8a8" stroke-width="2"/>
<text x="2819.7" y="2148.8" font-size="21.7" fill="#9a9a9a">View...</text>
<rect x="2933" y="2122" width="129" height="41" fill="#eeeeee" stroke="#a8a8a8" stroke-width="2"/>
<text x="2967.7" y="2148.8" font-size="21.7" fill="#9a9a9a">Delete</text>
<rect x="3701" y="2122" width="127" height="41" fill="url(#btng)" stroke="#7f95b3" stroke-width="2"/>
<text x="3733.8" y="2148.8" font-size="21.7" fill="#2a2a2a">New...</text>
<rect x="27.3" y="2198" width="44" height="51" fill="#ffffff" stroke="#000" stroke-width="2.5"/>
<rect x="92" y="2199" width="2766" height="50" fill="#f2f0b4" stroke="#a8a8a8" stroke-width="2"/>
<text x="105.5" y="2231.6" font-size="21.7" fill="#222"><tspan font-size="21.1" font-weight="bold">Component Instantiation:</tspan> 0 Errors, 1 Warning, <tspan font-size="21.1" font-weight="bold">System Connectivity:</tspan> 0 Errors, 1 Warning</text>
<rect x="2873" y="2199" width="261" height="50" fill="url(#btng)" stroke="#8a9db4" stroke-width="2"/>
<rect x="3140" y="2199" width="162" height="50" fill="url(#btng)" stroke="#8a9db4" stroke-width="2"/>
<rect x="3317" y="2199" width="319" height="50" fill="url(#btng)" stroke="#8a9db4" stroke-width="2"/>
<rect x="3651" y="2199" width="249" height="50" fill="url(#btng)" stroke="#8a9db4" stroke-width="2"/>
<text x="2933.3" y="2232.3" font-size="21.7" fill="#2a2a2a">Sync System Infos</text>
<text x="3219.7" y="2232.3" font-size="21.7" fill="#2a2a2a">Auto</text>
<text x="3376.6" y="2232.3" font-size="21.7" fill="#2a2a2a">Validate System Integrity</text>
<text x="3671.5" y="2232.3" font-size="21.7" fill="#2a2a2a">Generate HDL...</text>
<path d="M2898,2209 L2914,2209 L2920,2215 L2920,2240 L2898,2240 Z" fill="#fdf3d8" stroke="#b89878" stroke-width="1.8"/>
<path d="M2902,2221 L2915,2221 M2911,2217 L2915,2221 L2911,2225 M2915,2231 L2902,2231 M2906,2227 L2902,2231 L2906,2235" fill="none" stroke="#1a8ad8" stroke-width="2"/>
<rect x="3179.5" y="2215.5" width="32" height="17" fill="#5a5a5a" stroke="#333" stroke-width="1.5" rx="3.5"/>
<rect x="3338" y="2212" width="8" height="18" fill="#f59a12"/>
<rect x="3349" y="2210.5" width="20" height="21" fill="#10a0f0" stroke="#111" stroke-width="2"/>
<rect x="3346" y="2234" width="23" height="5.5" fill="#e83838"/>
<path d="M3340,2230 a7.5,7.5 0 1,0 15,0 a7.5,7.5 0 1,0 -15,0 Z" fill="#18b048"/>
<path d="M3343.5,2230 L3346.5,2233 L3351.5,2227" fill="none" stroke="#fff" stroke-width="1.8"/></svg></body></html>
